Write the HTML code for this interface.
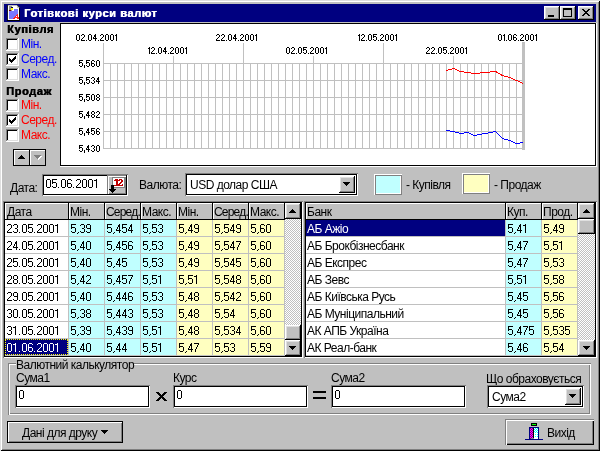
<!DOCTYPE html>
<html><head><meta charset="utf-8">
<style>
*{box-sizing:border-box;margin:0;padding:0}
html,body{width:600px;height:451px;overflow:hidden;background:#c0c0c0}
body{position:relative;font-family:"Liberation Sans",sans-serif;font-size:11px;color:#000}
.a{position:absolute}
.t{position:absolute;white-space:nowrap;line-height:16px;font-size:12px;letter-spacing:-0.5px}
.b{font-weight:bold;font-size:11px;letter-spacing:0.6px;text-shadow:0.6px 0 currentColor}
.raised{background:#c0c0c0;box-shadow:inset -1px -1px #000,inset 1px 1px #fff,inset -2px -2px #808080,inset 2px 2px #dfdfdf}
.sunk{background:#fff;box-shadow:inset 1px 1px #808080,inset -1px -1px #fff,inset 2px 2px #000,inset -2px -2px #000}
.cb{position:absolute;width:13px;height:13px;background:#fff;box-shadow:inset -1px -1px #fff,inset 1px 1px #808080,inset -2px -2px #dfdfdf,inset 2px 2px #000}
.cell{position:absolute;height:16px;line-height:16px;padding-left:2px;white-space:nowrap;overflow:hidden}
.cl{position:absolute;width:60px;text-align:right;font-size:9.6px;line-height:10px;letter-spacing:-0.6px;white-space:nowrap}
.cy{position:absolute;width:60px;text-align:right;font-size:9.6px;line-height:10px;letter-spacing:-0.6px;white-space:nowrap}
</style></head><body><div class="a" style="left:0;top:0;width:600px;height:451px;will-change:transform">
<!-- window frame -->
<div class="a" style="left:0;top:0;width:600px;height:451px;box-shadow:inset 1px 1px #dfdfdf,inset -1px -1px #000,inset 2px 2px #fff,inset -2px -2px #808080"></div>
<!-- title bar -->
<div class="a" style="left:4px;top:4px;width:592px;height:18px;background:#000080"></div>
<div class="t b" style="left:24px;top:5px;color:#fff">Готівкові курси валют</div>
<!-- icon -->
<svg class="a" style="left:5px;top:4px" width="17" height="18" shape-rendering="crispEdges">
<rect x="3" y="2" width="11" height="14" fill="#fff"/>
<rect x="2" y="1" width="10" height="1" fill="#c0c0c0"/>
<rect x="2" y="1" width="1" height="16" fill="#202020"/>
<rect x="2" y="16" width="13" height="1" fill="#000"/>
<rect x="14" y="4" width="1" height="13" fill="#000"/>
<path d="M12 1h1v1h-1zM13 2h1v1h-1zM14 3h1v1h-1z" fill="#404040"/>
<path d="M12 2h1v2h-1zM13 3h1v1h-1z" fill="#c0c0c0"/>
<path d="M4 2h3v6h-3z" fill="#909090"/>
<path d="M6 3h2v1h-2z" fill="#000040"/><path d="M6 4h2v2h-2z" fill="#ffff00"/><path d="M4 6h2v1h-2z" fill="#800000"/>
<path d="M9 5h4v2h-4zM4 7h9v2h-9zM4 9h9v1h-9zM4 10h8v1h-8zM4 11h7v1h-7zM4 12h6v1h-6zM4 13h5v1h-5zM4 14h4v1h-4z" fill="#7878ff"/>
<path d="M12 10h1v1h-1zM11 11h2v1h-2zM10 12h1v1h-1zM12 12h1v1h-1zM9 13h5v1h-5zM8 14h2v1h-2zM12 14h2v1h-2z" fill="#ff2020"/>
</svg>
<!-- title buttons -->
<div class="a raised" style="left:544px;top:6px;width:16px;height:14px"><div class="a" style="left:4px;top:9px;width:6px;height:2px;background:#000"></div></div>
<div class="a raised" style="left:560px;top:6px;width:16px;height:14px"><div class="a" style="left:3px;top:2px;width:9px;height:9px;border:1px solid #000;border-top-width:2px"></div></div>
<div class="a raised" style="left:578px;top:6px;width:16px;height:14px">
<svg class="a" style="left:0;top:0" width="16" height="14" shape-rendering="crispEdges"><path d="M4 3h2v1h-2zM10 3h2v1h-2zM5 4h2v1h-2zM9 4h2v1h-2zM6 5h4v1h-4zM7 6h2v1h-2zM6 7h4v1h-4zM5 8h2v1h-2zM9 8h2v1h-2zM4 9h2v1h-2zM10 9h2v1h-2z" fill="#000"/></svg>
</div>
<!-- left panel -->
<div class="t b" style="left:7px;top:21px">Купівля</div>
<div class="cb" style="left:6px;top:38px"></div><div class="t" style="left:21px;top:36px;color:#0000ff">Мін.</div>
<div class="cb" style="left:6px;top:53px"><svg class="a" style="left:3px;top:3px" width="7" height="7" shape-rendering="crispEdges"><path d="M6 0h1v1h-1zM5 1h2v1h-2zM0 2h1v1h-1zM4 2h3v1h-3zM0 3h2v1h-2zM3 3h3v1h-3zM0 4h5v1h-5zM1 5h3v1h-3zM2 6h1v1h-1z" fill="#000"/></svg></div><div class="t" style="left:21px;top:51px;color:#0000ff">Серед.</div>
<div class="cb" style="left:6px;top:68px"></div><div class="t" style="left:21px;top:66px;color:#0000ff">Макс.</div>
<div class="t b" style="left:6px;top:83px">Продаж</div>
<div class="cb" style="left:6px;top:99px"></div><div class="t" style="left:21px;top:97px;color:#ff0000">Мін.</div>
<div class="cb" style="left:6px;top:114px"><svg class="a" style="left:3px;top:3px" width="7" height="7" shape-rendering="crispEdges"><path d="M6 0h1v1h-1zM5 1h2v1h-2zM0 2h1v1h-1zM4 2h3v1h-3zM0 3h2v1h-2zM3 3h3v1h-3zM0 4h5v1h-5zM1 5h3v1h-3zM2 6h1v1h-1z" fill="#000"/></svg></div><div class="t" style="left:21px;top:112px;color:#ff0000">Серед.</div>
<div class="cb" style="left:6px;top:129px"></div><div class="t" style="left:21px;top:127px;color:#ff0000">Макс.</div>
<!-- spin buttons -->
<div class="a" style="left:13px;top:149px;width:33px;height:17px;background:#000"></div>
<div class="a" style="left:14px;top:150px;width:15px;height:15px;background:#c0c0c0;box-shadow:inset 1px 1px #fff"></div>
<div class="a" style="left:30px;top:150px;width:15px;height:15px;background:#c0c0c0;box-shadow:inset 1px 1px #fff"></div>
<svg class="a" style="left:18px;top:155px" width="7" height="4" shape-rendering="crispEdges"><path d="M3 0h1v1h-1zM2 1h3v1h-3zM1 2h5v1h-5zM0 3h7v1h-7z" fill="#000"/></svg>
<svg class="a" style="left:34px;top:155px" width="8" height="5" shape-rendering="crispEdges"><path d="M1 1h7v1h-7zM2 2h5v1h-5zM3 3h3v1h-3zM4 4h1v1h-1z" fill="#fff"/><path d="M0 0h7v1h-7zM1 1h5v1h-5zM2 2h3v1h-3zM3 3h1v1h-1z" fill="#808080"/></svg>
<!-- chart -->
<div class="a" style="left:60px;top:23px;width:537px;height:144px;background:#fff;box-shadow:inset -1px -1px #fff,inset 1px 1px #000,inset -2px -2px #000"></div>
<svg class="a" style="left:0;top:0" width="600" height="170" shape-rendering="crispEdges">
<path d="M103.5 63V149M110.5 63V149M117.5 63V149M124.5 63V149M131.5 63V149M138.5 63V149M145.5 63V149M152.5 63V149M159.5 63V149M166.5 63V149M173.5 63V149M180.5 63V149M187.5 63V149M194.5 63V149M201.5 63V149M208.5 63V149M215.5 63V149M222.5 63V149M229.5 63V149M236.5 63V149M243.5 63V149M250.5 63V149M257.5 63V149M264.5 63V149M271.5 63V149M278.5 63V149M285.5 63V149M292.5 63V149M299.5 63V149M306.5 63V149M313.5 63V149M320.5 63V149M327.5 63V149M334.5 63V149M341.5 63V149M348.5 63V149M355.5 63V149M362.5 63V149M369.5 63V149M376.5 63V149M383.5 63V149M390.5 63V149M397.5 63V149M404.5 63V149M411.5 63V149M418.5 63V149M425.5 63V149M432.5 63V149M439.5 63V149M446.5 63V149M453.5 63V149M460.5 63V149M467.5 63V149M474.5 63V149M481.5 63V149M488.5 63V149M495.5 63V149M502.5 63V149M509.5 63V149M516.5 63V149M523.5 63V149" stroke="#c0c0c0" stroke-width="1" fill="none"/>
<path d="M103 63.5H523M103 80.5H523M103 97.5H523M103 114.5H523M103 131.5H523M103 148.5H523" stroke="#c0c0c0" stroke-width="1" fill="none"/>
<path d="M103.5 43V63M173.5 56V63M243.5 43V63M313.5 56V63M383.5 43V63M453.5 56V63M523.5 43V63" stroke="#c0c0c0" stroke-width="1" fill="none"/>
<rect x="522" y="42" width="3" height="108" fill="#c0c0c0"/>
<polyline points="446.5,70.5 453.5,68.5 460.5,71.5 467.5,72.5 474.5,73.5 495.5,71.5 502.5,75.5 509.5,77.5 516.5,80.5 523.5,83.5" stroke="#ff0000" stroke-width="1" fill="none"/>
<polyline points="446.5,130.5 453.5,131.5 460.5,133.5 467.5,132.5 474.5,135.5 495.5,131.5 502.5,138.5 509.5,140.5 516.5,143.5 523.5,142.5" stroke="#0000ff" stroke-width="1" fill="none"/>
</svg>
<svg class="a" style="left:0;top:0" width="600" height="170" shape-rendering="crispEdges"><path d="M77 34h2v1h-2zM76 35h1v1h-1zM79 35h1v1h-1zM76 36h1v1h-1zM79 36h1v1h-1zM76 37h1v1h-1zM79 37h1v1h-1zM76 38h1v1h-1zM79 38h1v1h-1zM76 39h1v1h-1zM79 39h1v1h-1zM77 40h2v1h-2zM82 34h2v1h-2zM81 35h1v1h-1zM84 35h1v1h-1zM84 36h1v1h-1zM83 37h1v1h-1zM82 38h1v1h-1zM81 39h1v1h-1zM81 40h4v1h-4zM86 40h1v1h-1zM89 34h2v1h-2zM88 35h1v1h-1zM91 35h1v1h-1zM88 36h1v1h-1zM91 36h1v1h-1zM88 37h1v1h-1zM91 37h1v1h-1zM88 38h1v1h-1zM91 38h1v1h-1zM88 39h1v1h-1zM91 39h1v1h-1zM89 40h2v1h-2zM95 34h1v1h-1zM94 35h2v1h-2zM94 36h2v1h-2zM93 37h1v1h-1zM95 37h1v1h-1zM93 38h4v1h-4zM95 39h1v1h-1zM95 40h1v1h-1zM98 40h1v1h-1zM101 34h2v1h-2zM100 35h1v1h-1zM103 35h1v1h-1zM103 36h1v1h-1zM102 37h1v1h-1zM101 38h1v1h-1zM100 39h1v1h-1zM100 40h4v1h-4zM106 34h2v1h-2zM105 35h1v1h-1zM108 35h1v1h-1zM105 36h1v1h-1zM108 36h1v1h-1zM105 37h1v1h-1zM108 37h1v1h-1zM105 38h1v1h-1zM108 38h1v1h-1zM105 39h1v1h-1zM108 39h1v1h-1zM106 40h2v1h-2zM111 34h2v1h-2zM110 35h1v1h-1zM113 35h1v1h-1zM110 36h1v1h-1zM113 36h1v1h-1zM110 37h1v1h-1zM113 37h1v1h-1zM110 38h1v1h-1zM113 38h1v1h-1zM110 39h1v1h-1zM113 39h1v1h-1zM111 40h2v1h-2zM116 34h1v1h-1zM115 35h2v1h-2zM116 36h1v1h-1zM116 37h1v1h-1zM116 38h1v1h-1zM116 39h1v1h-1zM116 40h1v1h-1zM149 47h1v1h-1zM148 48h2v1h-2zM149 49h1v1h-1zM149 50h1v1h-1zM149 51h1v1h-1zM149 52h1v1h-1zM149 53h1v1h-1zM152 47h2v1h-2zM151 48h1v1h-1zM154 48h1v1h-1zM154 49h1v1h-1zM153 50h1v1h-1zM152 51h1v1h-1zM151 52h1v1h-1zM151 53h4v1h-4zM156 53h1v1h-1zM159 47h2v1h-2zM158 48h1v1h-1zM161 48h1v1h-1zM158 49h1v1h-1zM161 49h1v1h-1zM158 50h1v1h-1zM161 50h1v1h-1zM158 51h1v1h-1zM161 51h1v1h-1zM158 52h1v1h-1zM161 52h1v1h-1zM159 53h2v1h-2zM165 47h1v1h-1zM164 48h2v1h-2zM164 49h2v1h-2zM163 50h1v1h-1zM165 50h1v1h-1zM163 51h4v1h-4zM165 52h1v1h-1zM165 53h1v1h-1zM168 53h1v1h-1zM171 47h2v1h-2zM170 48h1v1h-1zM173 48h1v1h-1zM173 49h1v1h-1zM172 50h1v1h-1zM171 51h1v1h-1zM170 52h1v1h-1zM170 53h4v1h-4zM176 47h2v1h-2zM175 48h1v1h-1zM178 48h1v1h-1zM175 49h1v1h-1zM178 49h1v1h-1zM175 50h1v1h-1zM178 50h1v1h-1zM175 51h1v1h-1zM178 51h1v1h-1zM175 52h1v1h-1zM178 52h1v1h-1zM176 53h2v1h-2zM181 47h2v1h-2zM180 48h1v1h-1zM183 48h1v1h-1zM180 49h1v1h-1zM183 49h1v1h-1zM180 50h1v1h-1zM183 50h1v1h-1zM180 51h1v1h-1zM183 51h1v1h-1zM180 52h1v1h-1zM183 52h1v1h-1zM181 53h2v1h-2zM186 47h1v1h-1zM185 48h2v1h-2zM186 49h1v1h-1zM186 50h1v1h-1zM186 51h1v1h-1zM186 52h1v1h-1zM186 53h1v1h-1zM217 34h2v1h-2zM216 35h1v1h-1zM219 35h1v1h-1zM219 36h1v1h-1zM218 37h1v1h-1zM217 38h1v1h-1zM216 39h1v1h-1zM216 40h4v1h-4zM222 34h2v1h-2zM221 35h1v1h-1zM224 35h1v1h-1zM224 36h1v1h-1zM223 37h1v1h-1zM222 38h1v1h-1zM221 39h1v1h-1zM221 40h4v1h-4zM226 40h1v1h-1zM229 34h2v1h-2zM228 35h1v1h-1zM231 35h1v1h-1zM228 36h1v1h-1zM231 36h1v1h-1zM228 37h1v1h-1zM231 37h1v1h-1zM228 38h1v1h-1zM231 38h1v1h-1zM228 39h1v1h-1zM231 39h1v1h-1zM229 40h2v1h-2zM235 34h1v1h-1zM234 35h2v1h-2zM234 36h2v1h-2zM233 37h1v1h-1zM235 37h1v1h-1zM233 38h4v1h-4zM235 39h1v1h-1zM235 40h1v1h-1zM238 40h1v1h-1zM241 34h2v1h-2zM240 35h1v1h-1zM243 35h1v1h-1zM243 36h1v1h-1zM242 37h1v1h-1zM241 38h1v1h-1zM240 39h1v1h-1zM240 40h4v1h-4zM246 34h2v1h-2zM245 35h1v1h-1zM248 35h1v1h-1zM245 36h1v1h-1zM248 36h1v1h-1zM245 37h1v1h-1zM248 37h1v1h-1zM245 38h1v1h-1zM248 38h1v1h-1zM245 39h1v1h-1zM248 39h1v1h-1zM246 40h2v1h-2zM251 34h2v1h-2zM250 35h1v1h-1zM253 35h1v1h-1zM250 36h1v1h-1zM253 36h1v1h-1zM250 37h1v1h-1zM253 37h1v1h-1zM250 38h1v1h-1zM253 38h1v1h-1zM250 39h1v1h-1zM253 39h1v1h-1zM251 40h2v1h-2zM256 34h1v1h-1zM255 35h2v1h-2zM256 36h1v1h-1zM256 37h1v1h-1zM256 38h1v1h-1zM256 39h1v1h-1zM256 40h1v1h-1zM287 47h2v1h-2zM286 48h1v1h-1zM289 48h1v1h-1zM286 49h1v1h-1zM289 49h1v1h-1zM286 50h1v1h-1zM289 50h1v1h-1zM286 51h1v1h-1zM289 51h1v1h-1zM286 52h1v1h-1zM289 52h1v1h-1zM287 53h2v1h-2zM292 47h2v1h-2zM291 48h1v1h-1zM294 48h1v1h-1zM294 49h1v1h-1zM293 50h1v1h-1zM292 51h1v1h-1zM291 52h1v1h-1zM291 53h4v1h-4zM296 53h1v1h-1zM299 47h2v1h-2zM298 48h1v1h-1zM301 48h1v1h-1zM298 49h1v1h-1zM301 49h1v1h-1zM298 50h1v1h-1zM301 50h1v1h-1zM298 51h1v1h-1zM301 51h1v1h-1zM298 52h1v1h-1zM301 52h1v1h-1zM299 53h2v1h-2zM303 47h4v1h-4zM303 48h1v1h-1zM303 49h3v1h-3zM303 50h1v1h-1zM306 50h1v1h-1zM306 51h1v1h-1zM303 52h1v1h-1zM306 52h1v1h-1zM304 53h2v1h-2zM308 53h1v1h-1zM311 47h2v1h-2zM310 48h1v1h-1zM313 48h1v1h-1zM313 49h1v1h-1zM312 50h1v1h-1zM311 51h1v1h-1zM310 52h1v1h-1zM310 53h4v1h-4zM316 47h2v1h-2zM315 48h1v1h-1zM318 48h1v1h-1zM315 49h1v1h-1zM318 49h1v1h-1zM315 50h1v1h-1zM318 50h1v1h-1zM315 51h1v1h-1zM318 51h1v1h-1zM315 52h1v1h-1zM318 52h1v1h-1zM316 53h2v1h-2zM321 47h2v1h-2zM320 48h1v1h-1zM323 48h1v1h-1zM320 49h1v1h-1zM323 49h1v1h-1zM320 50h1v1h-1zM323 50h1v1h-1zM320 51h1v1h-1zM323 51h1v1h-1zM320 52h1v1h-1zM323 52h1v1h-1zM321 53h2v1h-2zM326 47h1v1h-1zM325 48h2v1h-2zM326 49h1v1h-1zM326 50h1v1h-1zM326 51h1v1h-1zM326 52h1v1h-1zM326 53h1v1h-1zM359 34h1v1h-1zM358 35h2v1h-2zM359 36h1v1h-1zM359 37h1v1h-1zM359 38h1v1h-1zM359 39h1v1h-1zM359 40h1v1h-1zM362 34h2v1h-2zM361 35h1v1h-1zM364 35h1v1h-1zM364 36h1v1h-1zM363 37h1v1h-1zM362 38h1v1h-1zM361 39h1v1h-1zM361 40h4v1h-4zM366 40h1v1h-1zM369 34h2v1h-2zM368 35h1v1h-1zM371 35h1v1h-1zM368 36h1v1h-1zM371 36h1v1h-1zM368 37h1v1h-1zM371 37h1v1h-1zM368 38h1v1h-1zM371 38h1v1h-1zM368 39h1v1h-1zM371 39h1v1h-1zM369 40h2v1h-2zM373 34h4v1h-4zM373 35h1v1h-1zM373 36h3v1h-3zM373 37h1v1h-1zM376 37h1v1h-1zM376 38h1v1h-1zM373 39h1v1h-1zM376 39h1v1h-1zM374 40h2v1h-2zM378 40h1v1h-1zM381 34h2v1h-2zM380 35h1v1h-1zM383 35h1v1h-1zM383 36h1v1h-1zM382 37h1v1h-1zM381 38h1v1h-1zM380 39h1v1h-1zM380 40h4v1h-4zM386 34h2v1h-2zM385 35h1v1h-1zM388 35h1v1h-1zM385 36h1v1h-1zM388 36h1v1h-1zM385 37h1v1h-1zM388 37h1v1h-1zM385 38h1v1h-1zM388 38h1v1h-1zM385 39h1v1h-1zM388 39h1v1h-1zM386 40h2v1h-2zM391 34h2v1h-2zM390 35h1v1h-1zM393 35h1v1h-1zM390 36h1v1h-1zM393 36h1v1h-1zM390 37h1v1h-1zM393 37h1v1h-1zM390 38h1v1h-1zM393 38h1v1h-1zM390 39h1v1h-1zM393 39h1v1h-1zM391 40h2v1h-2zM396 34h1v1h-1zM395 35h2v1h-2zM396 36h1v1h-1zM396 37h1v1h-1zM396 38h1v1h-1zM396 39h1v1h-1zM396 40h1v1h-1zM427 47h2v1h-2zM426 48h1v1h-1zM429 48h1v1h-1zM429 49h1v1h-1zM428 50h1v1h-1zM427 51h1v1h-1zM426 52h1v1h-1zM426 53h4v1h-4zM432 47h2v1h-2zM431 48h1v1h-1zM434 48h1v1h-1zM434 49h1v1h-1zM433 50h1v1h-1zM432 51h1v1h-1zM431 52h1v1h-1zM431 53h4v1h-4zM436 53h1v1h-1zM439 47h2v1h-2zM438 48h1v1h-1zM441 48h1v1h-1zM438 49h1v1h-1zM441 49h1v1h-1zM438 50h1v1h-1zM441 50h1v1h-1zM438 51h1v1h-1zM441 51h1v1h-1zM438 52h1v1h-1zM441 52h1v1h-1zM439 53h2v1h-2zM443 47h4v1h-4zM443 48h1v1h-1zM443 49h3v1h-3zM443 50h1v1h-1zM446 50h1v1h-1zM446 51h1v1h-1zM443 52h1v1h-1zM446 52h1v1h-1zM444 53h2v1h-2zM448 53h1v1h-1zM451 47h2v1h-2zM450 48h1v1h-1zM453 48h1v1h-1zM453 49h1v1h-1zM452 50h1v1h-1zM451 51h1v1h-1zM450 52h1v1h-1zM450 53h4v1h-4zM456 47h2v1h-2zM455 48h1v1h-1zM458 48h1v1h-1zM455 49h1v1h-1zM458 49h1v1h-1zM455 50h1v1h-1zM458 50h1v1h-1zM455 51h1v1h-1zM458 51h1v1h-1zM455 52h1v1h-1zM458 52h1v1h-1zM456 53h2v1h-2zM461 47h2v1h-2zM460 48h1v1h-1zM463 48h1v1h-1zM460 49h1v1h-1zM463 49h1v1h-1zM460 50h1v1h-1zM463 50h1v1h-1zM460 51h1v1h-1zM463 51h1v1h-1zM460 52h1v1h-1zM463 52h1v1h-1zM461 53h2v1h-2zM466 47h1v1h-1zM465 48h2v1h-2zM466 49h1v1h-1zM466 50h1v1h-1zM466 51h1v1h-1zM466 52h1v1h-1zM466 53h1v1h-1zM499 34h2v1h-2zM498 35h1v1h-1zM501 35h1v1h-1zM498 36h1v1h-1zM501 36h1v1h-1zM498 37h1v1h-1zM501 37h1v1h-1zM498 38h1v1h-1zM501 38h1v1h-1zM498 39h1v1h-1zM501 39h1v1h-1zM499 40h2v1h-2zM504 34h1v1h-1zM503 35h2v1h-2zM504 36h1v1h-1zM504 37h1v1h-1zM504 38h1v1h-1zM504 39h1v1h-1zM504 40h1v1h-1zM506 40h1v1h-1zM509 34h2v1h-2zM508 35h1v1h-1zM511 35h1v1h-1zM508 36h1v1h-1zM511 36h1v1h-1zM508 37h1v1h-1zM511 37h1v1h-1zM508 38h1v1h-1zM511 38h1v1h-1zM508 39h1v1h-1zM511 39h1v1h-1zM509 40h2v1h-2zM514 34h2v1h-2zM513 35h1v1h-1zM516 35h1v1h-1zM513 36h1v1h-1zM513 37h3v1h-3zM513 38h1v1h-1zM516 38h1v1h-1zM513 39h1v1h-1zM516 39h1v1h-1zM514 40h2v1h-2zM518 40h1v1h-1zM521 34h2v1h-2zM520 35h1v1h-1zM523 35h1v1h-1zM523 36h1v1h-1zM522 37h1v1h-1zM521 38h1v1h-1zM520 39h1v1h-1zM520 40h4v1h-4zM526 34h2v1h-2zM525 35h1v1h-1zM528 35h1v1h-1zM525 36h1v1h-1zM528 36h1v1h-1zM525 37h1v1h-1zM528 37h1v1h-1zM525 38h1v1h-1zM528 38h1v1h-1zM525 39h1v1h-1zM528 39h1v1h-1zM526 40h2v1h-2zM531 34h2v1h-2zM530 35h1v1h-1zM533 35h1v1h-1zM530 36h1v1h-1zM533 36h1v1h-1zM530 37h1v1h-1zM533 37h1v1h-1zM530 38h1v1h-1zM533 38h1v1h-1zM530 39h1v1h-1zM533 39h1v1h-1zM531 40h2v1h-2zM536 34h1v1h-1zM535 35h2v1h-2zM536 36h1v1h-1zM536 37h1v1h-1zM536 38h1v1h-1zM536 39h1v1h-1zM536 40h1v1h-1zM79 60h4v1h-4zM79 61h1v1h-1zM79 62h3v1h-3zM79 63h1v1h-1zM82 63h1v1h-1zM82 64h1v1h-1zM79 65h1v1h-1zM82 65h1v1h-1zM80 66h2v1h-2zM84 65h1v1h-1zM84 66h1v1h-1zM84 67h1v1h-1zM86 60h4v1h-4zM86 61h1v1h-1zM86 62h3v1h-3zM86 63h1v1h-1zM89 63h1v1h-1zM89 64h1v1h-1zM86 65h1v1h-1zM89 65h1v1h-1zM87 66h2v1h-2zM92 60h2v1h-2zM91 61h1v1h-1zM94 61h1v1h-1zM91 62h1v1h-1zM91 63h3v1h-3zM91 64h1v1h-1zM94 64h1v1h-1zM91 65h1v1h-1zM94 65h1v1h-1zM92 66h2v1h-2zM97 60h2v1h-2zM96 61h1v1h-1zM99 61h1v1h-1zM96 62h1v1h-1zM99 62h1v1h-1zM96 63h1v1h-1zM99 63h1v1h-1zM96 64h1v1h-1zM99 64h1v1h-1zM96 65h1v1h-1zM99 65h1v1h-1zM97 66h2v1h-2zM79 77h4v1h-4zM79 78h1v1h-1zM79 79h3v1h-3zM79 80h1v1h-1zM82 80h1v1h-1zM82 81h1v1h-1zM79 82h1v1h-1zM82 82h1v1h-1zM80 83h2v1h-2zM84 82h1v1h-1zM84 83h1v1h-1zM84 84h1v1h-1zM86 77h4v1h-4zM86 78h1v1h-1zM86 79h3v1h-3zM86 80h1v1h-1zM89 80h1v1h-1zM89 81h1v1h-1zM86 82h1v1h-1zM89 82h1v1h-1zM87 83h2v1h-2zM92 77h2v1h-2zM91 78h1v1h-1zM94 78h1v1h-1zM94 79h1v1h-1zM93 80h1v1h-1zM94 81h1v1h-1zM91 82h1v1h-1zM94 82h1v1h-1zM92 83h2v1h-2zM98 77h1v1h-1zM97 78h2v1h-2zM97 79h2v1h-2zM96 80h1v1h-1zM98 80h1v1h-1zM96 81h4v1h-4zM98 82h1v1h-1zM98 83h1v1h-1zM79 94h4v1h-4zM79 95h1v1h-1zM79 96h3v1h-3zM79 97h1v1h-1zM82 97h1v1h-1zM82 98h1v1h-1zM79 99h1v1h-1zM82 99h1v1h-1zM80 100h2v1h-2zM84 99h1v1h-1zM84 100h1v1h-1zM84 101h1v1h-1zM86 94h4v1h-4zM86 95h1v1h-1zM86 96h3v1h-3zM86 97h1v1h-1zM89 97h1v1h-1zM89 98h1v1h-1zM86 99h1v1h-1zM89 99h1v1h-1zM87 100h2v1h-2zM92 94h2v1h-2zM91 95h1v1h-1zM94 95h1v1h-1zM91 96h1v1h-1zM94 96h1v1h-1zM91 97h1v1h-1zM94 97h1v1h-1zM91 98h1v1h-1zM94 98h1v1h-1zM91 99h1v1h-1zM94 99h1v1h-1zM92 100h2v1h-2zM97 94h2v1h-2zM96 95h1v1h-1zM99 95h1v1h-1zM96 96h1v1h-1zM99 96h1v1h-1zM97 97h2v1h-2zM96 98h1v1h-1zM99 98h1v1h-1zM96 99h1v1h-1zM99 99h1v1h-1zM97 100h2v1h-2zM79 111h4v1h-4zM79 112h1v1h-1zM79 113h3v1h-3zM79 114h1v1h-1zM82 114h1v1h-1zM82 115h1v1h-1zM79 116h1v1h-1zM82 116h1v1h-1zM80 117h2v1h-2zM84 116h1v1h-1zM84 117h1v1h-1zM84 118h1v1h-1zM88 111h1v1h-1zM87 112h2v1h-2zM87 113h2v1h-2zM86 114h1v1h-1zM88 114h1v1h-1zM86 115h4v1h-4zM88 116h1v1h-1zM88 117h1v1h-1zM92 111h2v1h-2zM91 112h1v1h-1zM94 112h1v1h-1zM91 113h1v1h-1zM94 113h1v1h-1zM92 114h2v1h-2zM91 115h1v1h-1zM94 115h1v1h-1zM91 116h1v1h-1zM94 116h1v1h-1zM92 117h2v1h-2zM97 111h2v1h-2zM96 112h1v1h-1zM99 112h1v1h-1zM99 113h1v1h-1zM98 114h1v1h-1zM97 115h1v1h-1zM96 116h1v1h-1zM96 117h4v1h-4zM79 128h4v1h-4zM79 129h1v1h-1zM79 130h3v1h-3zM79 131h1v1h-1zM82 131h1v1h-1zM82 132h1v1h-1zM79 133h1v1h-1zM82 133h1v1h-1zM80 134h2v1h-2zM84 133h1v1h-1zM84 134h1v1h-1zM84 135h1v1h-1zM88 128h1v1h-1zM87 129h2v1h-2zM87 130h2v1h-2zM86 131h1v1h-1zM88 131h1v1h-1zM86 132h4v1h-4zM88 133h1v1h-1zM88 134h1v1h-1zM91 128h4v1h-4zM91 129h1v1h-1zM91 130h3v1h-3zM91 131h1v1h-1zM94 131h1v1h-1zM94 132h1v1h-1zM91 133h1v1h-1zM94 133h1v1h-1zM92 134h2v1h-2zM97 128h2v1h-2zM96 129h1v1h-1zM99 129h1v1h-1zM96 130h1v1h-1zM96 131h3v1h-3zM96 132h1v1h-1zM99 132h1v1h-1zM96 133h1v1h-1zM99 133h1v1h-1zM97 134h2v1h-2zM79 145h4v1h-4zM79 146h1v1h-1zM79 147h3v1h-3zM79 148h1v1h-1zM82 148h1v1h-1zM82 149h1v1h-1zM79 150h1v1h-1zM82 150h1v1h-1zM80 151h2v1h-2zM84 150h1v1h-1zM84 151h1v1h-1zM84 152h1v1h-1zM88 145h1v1h-1zM87 146h2v1h-2zM87 147h2v1h-2zM86 148h1v1h-1zM88 148h1v1h-1zM86 149h4v1h-4zM88 150h1v1h-1zM88 151h1v1h-1zM92 145h2v1h-2zM91 146h1v1h-1zM94 146h1v1h-1zM94 147h1v1h-1zM93 148h1v1h-1zM94 149h1v1h-1zM91 150h1v1h-1zM94 150h1v1h-1zM92 151h2v1h-2zM97 145h2v1h-2zM96 146h1v1h-1zM99 146h1v1h-1zM96 147h1v1h-1zM99 147h1v1h-1zM96 148h1v1h-1zM99 148h1v1h-1zM96 149h1v1h-1zM99 149h1v1h-1zM96 150h1v1h-1zM99 150h1v1h-1zM97 151h2v1h-2z" fill="#000"/></svg>
<!-- date row -->
<div class="t" style="left:10px;top:180px">Дата:</div>
<div class="a" style="left:42px;top:174px;width:86px;height:22px;background:#fff;box-shadow:inset 1px 1px #808080,inset -1px -1px #fff,inset 2px 2px #000,inset -2px -2px #000"></div>
<div class="a" style="left:107px;top:176px;width:19px;height:18px;background:#c0c0c0;box-shadow:inset 1px 0 #808080,inset 2px 1px #fff,inset -1px -1px #808080"></div>
<div class="a" style="left:107px;top:175px;width:19px;height:1px;background:#808080"></div>
<svg class="a" style="left:107px;top:175px" width="20" height="20" shape-rendering="crispEdges">
<rect x="5" y="2" width="13" height="11" fill="#808080"/><rect x="6" y="3" width="11" height="9" fill="#fff"/>
<path d="M8 4h3v1h-3zM7 5h4v1h-4zM9 6h2v4h-2zM7 10h4v1h-4z M12 4h3v1h-3zM11 5h2v1h-2zM14 5h2v1h-2zM14 6h2v1h-2zM13 7h2v1h-2zM12 8h2v1h-2zM11 9h2v1h-2zM15 9h1v1h-1zM11 10h5v1h-5z" fill="#c00000"/>
<path d="M4 10h3v4h-3zM2 14h7v1h-7zM3 15h5v1h-5zM4 16h3v1h-3zM5 17h1v1h-1z" fill="#000"/>
</svg>
<div class="t" style="left:139px;top:177px">Валюта:</div>
<div class="a" style="left:185px;top:173px;width:173px;height:23px;background:#fff;box-shadow:inset 1px 1px #808080,inset -1px -1px #fff,inset 2px 2px #000,inset -2px -2px #000"></div>
<div class="t" style="left:190px;top:177px">USD долар США</div>
<div class="a" style="left:339px;top:176px;width:16px;height:17px;background:#c0c0c0;box-shadow:inset -1px -1px #000,inset 1px 1px #fff,inset -2px -2px #808080,inset 2px 2px #dfdfdf"></div>
<svg class="a" style="left:343px;top:182px" width="7" height="4" shape-rendering="crispEdges"><path d="M0 0h7v1h-7zM1 1h5v1h-5zM2 2h3v1h-3zM3 3h1v1h-1z" fill="#000"/></svg>
<div class="a" style="left:374px;top:174px;width:28px;height:21px;background:#c0ffff;box-shadow:inset 1px 1px #fff,inset -1px -1px #808080,inset 2px 2px #808080,inset -2px -2px #fff"></div>
<div class="t" style="left:406px;top:177px">- Купівля</div>
<div class="a" style="left:462px;top:173px;width:28px;height:21px;background:#ffffc0;box-shadow:inset 1px 1px #fff,inset -1px -1px #808080,inset 2px 2px #808080,inset -2px -2px #fff"></div>
<div class="t" style="left:494px;top:177px">- Продаж</div>

<!-- left grid -->
<div class="a" style="left:3px;top:201px;width:300px;height:157px;background:#c0c0c0;box-shadow:inset 1px 1px #808080,inset -1px -1px #fff,inset 2px 2px #000,inset -2px -2px #000"></div>
<div class="a" style="left:4px;top:202px;width:281px;height:18px;background:#000"></div>
<div class="a" style="left:5px;top:203px;width:63px;height:16px;background:#c0c0c0;box-shadow:inset 1px 1px #fff"></div>
<div class="t" style="left:7px;top:204px">Дата</div>
<div class="a" style="left:69px;top:203px;width:35px;height:16px;background:#c0c0c0;box-shadow:inset 1px 1px #fff"></div>
<div class="t" style="left:70px;top:204px">Мін.</div>
<div class="a" style="left:105px;top:203px;width:35px;height:16px;background:#c0c0c0;box-shadow:inset 1px 1px #fff"></div>
<div class="t" style="left:106px;top:204px;letter-spacing:-0.8px">Серед.</div>
<div class="a" style="left:141px;top:203px;width:35px;height:16px;background:#c0c0c0;box-shadow:inset 1px 1px #fff"></div>
<div class="t" style="left:142px;top:204px">Макс.</div>
<div class="a" style="left:177px;top:203px;width:35px;height:16px;background:#c0c0c0;box-shadow:inset 1px 1px #fff"></div>
<div class="t" style="left:178px;top:204px">Мін.</div>
<div class="a" style="left:213px;top:203px;width:35px;height:16px;background:#c0c0c0;box-shadow:inset 1px 1px #fff"></div>
<div class="t" style="left:214px;top:204px;letter-spacing:-0.8px">Серед.</div>
<div class="a" style="left:249px;top:203px;width:35px;height:16px;background:#c0c0c0;box-shadow:inset 1px 1px #fff"></div>
<div class="t" style="left:250px;top:204px">Макс.</div>
<div class="a" style="left:5px;top:220px;width:280px;height:136px;background:#c0c0c0"></div>
<div class="a" style="left:5px;top:220px;width:63px;height:16px;background:#fff"></div>
<div class="a" style="left:69px;top:220px;width:35px;height:16px;background:#c0ffff"></div>
<div class="a" style="left:105px;top:220px;width:35px;height:16px;background:#c0ffff"></div>
<div class="a" style="left:141px;top:220px;width:35px;height:16px;background:#c0ffff"></div>
<div class="a" style="left:177px;top:220px;width:35px;height:16px;background:#ffffc0"></div>
<div class="a" style="left:213px;top:220px;width:35px;height:16px;background:#ffffc0"></div>
<div class="a" style="left:249px;top:220px;width:35px;height:16px;background:#ffffc0"></div>
<div class="a" style="left:5px;top:237px;width:63px;height:16px;background:#fff"></div>
<div class="a" style="left:69px;top:237px;width:35px;height:16px;background:#c0ffff"></div>
<div class="a" style="left:105px;top:237px;width:35px;height:16px;background:#c0ffff"></div>
<div class="a" style="left:141px;top:237px;width:35px;height:16px;background:#c0ffff"></div>
<div class="a" style="left:177px;top:237px;width:35px;height:16px;background:#ffffc0"></div>
<div class="a" style="left:213px;top:237px;width:35px;height:16px;background:#ffffc0"></div>
<div class="a" style="left:249px;top:237px;width:35px;height:16px;background:#ffffc0"></div>
<div class="a" style="left:5px;top:254px;width:63px;height:16px;background:#fff"></div>
<div class="a" style="left:69px;top:254px;width:35px;height:16px;background:#c0ffff"></div>
<div class="a" style="left:105px;top:254px;width:35px;height:16px;background:#c0ffff"></div>
<div class="a" style="left:141px;top:254px;width:35px;height:16px;background:#c0ffff"></div>
<div class="a" style="left:177px;top:254px;width:35px;height:16px;background:#ffffc0"></div>
<div class="a" style="left:213px;top:254px;width:35px;height:16px;background:#ffffc0"></div>
<div class="a" style="left:249px;top:254px;width:35px;height:16px;background:#ffffc0"></div>
<div class="a" style="left:5px;top:271px;width:63px;height:16px;background:#fff"></div>
<div class="a" style="left:69px;top:271px;width:35px;height:16px;background:#c0ffff"></div>
<div class="a" style="left:105px;top:271px;width:35px;height:16px;background:#c0ffff"></div>
<div class="a" style="left:141px;top:271px;width:35px;height:16px;background:#c0ffff"></div>
<div class="a" style="left:177px;top:271px;width:35px;height:16px;background:#ffffc0"></div>
<div class="a" style="left:213px;top:271px;width:35px;height:16px;background:#ffffc0"></div>
<div class="a" style="left:249px;top:271px;width:35px;height:16px;background:#ffffc0"></div>
<div class="a" style="left:5px;top:288px;width:63px;height:16px;background:#fff"></div>
<div class="a" style="left:69px;top:288px;width:35px;height:16px;background:#c0ffff"></div>
<div class="a" style="left:105px;top:288px;width:35px;height:16px;background:#c0ffff"></div>
<div class="a" style="left:141px;top:288px;width:35px;height:16px;background:#c0ffff"></div>
<div class="a" style="left:177px;top:288px;width:35px;height:16px;background:#ffffc0"></div>
<div class="a" style="left:213px;top:288px;width:35px;height:16px;background:#ffffc0"></div>
<div class="a" style="left:249px;top:288px;width:35px;height:16px;background:#ffffc0"></div>
<div class="a" style="left:5px;top:305px;width:63px;height:16px;background:#fff"></div>
<div class="a" style="left:69px;top:305px;width:35px;height:16px;background:#c0ffff"></div>
<div class="a" style="left:105px;top:305px;width:35px;height:16px;background:#c0ffff"></div>
<div class="a" style="left:141px;top:305px;width:35px;height:16px;background:#c0ffff"></div>
<div class="a" style="left:177px;top:305px;width:35px;height:16px;background:#ffffc0"></div>
<div class="a" style="left:213px;top:305px;width:35px;height:16px;background:#ffffc0"></div>
<div class="a" style="left:249px;top:305px;width:35px;height:16px;background:#ffffc0"></div>
<div class="a" style="left:5px;top:322px;width:63px;height:16px;background:#fff"></div>
<div class="a" style="left:69px;top:322px;width:35px;height:16px;background:#c0ffff"></div>
<div class="a" style="left:105px;top:322px;width:35px;height:16px;background:#c0ffff"></div>
<div class="a" style="left:141px;top:322px;width:35px;height:16px;background:#c0ffff"></div>
<div class="a" style="left:177px;top:322px;width:35px;height:16px;background:#ffffc0"></div>
<div class="a" style="left:213px;top:322px;width:35px;height:16px;background:#ffffc0"></div>
<div class="a" style="left:249px;top:322px;width:35px;height:16px;background:#ffffc0"></div>
<div class="a" style="left:5px;top:339px;width:63px;height:16px;background:#000080"></div>
<div class="a" style="left:69px;top:339px;width:35px;height:16px;background:#c0ffff"></div>
<div class="a" style="left:105px;top:339px;width:35px;height:16px;background:#c0ffff"></div>
<div class="a" style="left:141px;top:339px;width:35px;height:16px;background:#c0ffff"></div>
<div class="a" style="left:177px;top:339px;width:35px;height:16px;background:#ffffc0"></div>
<div class="a" style="left:213px;top:339px;width:35px;height:16px;background:#ffffc0"></div>
<div class="a" style="left:249px;top:339px;width:35px;height:16px;background:#ffffc0"></div>
<div class="a" style="left:5px;top:339px;width:63px;height:16px;border:1px dotted #ffff00"></div>
<div class="a" style="left:285px;top:219px;width:16px;height:121px;background-color:#c0c0c0;background-image:linear-gradient(45deg,#fff 25%,transparent 25%,transparent 75%,#fff 75%),linear-gradient(45deg,#fff 25%,transparent 25%,transparent 75%,#fff 75%);background-size:2px 2px;background-position:0 0,1px 1px"></div>
<div class="a raised" style="left:285px;top:203px;width:16px;height:16px"></div>
<svg class="a" style="left:289px;top:209px" width="7" height="4" shape-rendering="crispEdges"><path d="M3 0h1v1h-1zM2 1h3v1h-3zM1 2h5v1h-5zM0 3h7v1h-7z" fill="#000"/></svg>
<div class="a raised" style="left:285px;top:325px;width:16px;height:15px"></div>
<div class="a raised" style="left:285px;top:340px;width:16px;height:16px"></div>
<svg class="a" style="left:289px;top:346px" width="7" height="4" shape-rendering="crispEdges"><path d="M0 0h7v1h-7zM1 1h5v1h-5zM2 2h3v1h-3zM3 3h1v1h-1z" fill="#000"/></svg>
<!-- right grid -->
<div class="a" style="left:304px;top:201px;width:293px;height:157px;background:#c0c0c0;box-shadow:inset 1px 1px #808080,inset -1px -1px #fff,inset 2px 2px #000,inset -2px -2px #000"></div>
<div class="a" style="left:305px;top:202px;width:273px;height:18px;background:#000"></div>
<div class="a" style="left:306px;top:203px;width:199px;height:16px;background:#c0c0c0;box-shadow:inset 1px 1px #fff"></div>
<div class="t" style="left:307px;top:204px">Банк</div>
<div class="a" style="left:506px;top:203px;width:35px;height:16px;background:#c0c0c0;box-shadow:inset 1px 1px #fff"></div>
<div class="t" style="left:507px;top:204px">Куп.</div>
<div class="a" style="left:542px;top:203px;width:35px;height:16px;background:#c0c0c0;box-shadow:inset 1px 1px #fff"></div>
<div class="t" style="left:543px;top:204px">Прод.</div>
<div class="a" style="left:306px;top:220px;width:272px;height:136px;background:#c0c0c0"></div>
<div class="a" style="left:306px;top:220px;width:199px;height:16px;background:#000080"></div>
<div class="t" style="left:307px;top:221px;color:#fff">АБ Ажіо</div>
<div class="a" style="left:506px;top:220px;width:35px;height:16px;background:#c0ffff"></div>
<div class="a" style="left:542px;top:220px;width:35px;height:16px;background:#ffffc0"></div>
<div class="a" style="left:306px;top:237px;width:199px;height:16px;background:#fff"></div>
<div class="t" style="left:307px;top:238px;color:#000">АБ Брокбізнесбанк</div>
<div class="a" style="left:506px;top:237px;width:35px;height:16px;background:#c0ffff"></div>
<div class="a" style="left:542px;top:237px;width:35px;height:16px;background:#ffffc0"></div>
<div class="a" style="left:306px;top:254px;width:199px;height:16px;background:#fff"></div>
<div class="t" style="left:307px;top:255px;color:#000">АБ Експрес</div>
<div class="a" style="left:506px;top:254px;width:35px;height:16px;background:#c0ffff"></div>
<div class="a" style="left:542px;top:254px;width:35px;height:16px;background:#ffffc0"></div>
<div class="a" style="left:306px;top:271px;width:199px;height:16px;background:#fff"></div>
<div class="t" style="left:307px;top:272px;color:#000">АБ Зевс</div>
<div class="a" style="left:506px;top:271px;width:35px;height:16px;background:#c0ffff"></div>
<div class="a" style="left:542px;top:271px;width:35px;height:16px;background:#ffffc0"></div>
<div class="a" style="left:306px;top:288px;width:199px;height:16px;background:#fff"></div>
<div class="t" style="left:307px;top:289px;color:#000">АБ Київська Русь</div>
<div class="a" style="left:506px;top:288px;width:35px;height:16px;background:#c0ffff"></div>
<div class="a" style="left:542px;top:288px;width:35px;height:16px;background:#ffffc0"></div>
<div class="a" style="left:306px;top:305px;width:199px;height:16px;background:#fff"></div>
<div class="t" style="left:307px;top:306px;color:#000">АБ Муніципальний</div>
<div class="a" style="left:506px;top:305px;width:35px;height:16px;background:#c0ffff"></div>
<div class="a" style="left:542px;top:305px;width:35px;height:16px;background:#ffffc0"></div>
<div class="a" style="left:306px;top:322px;width:199px;height:16px;background:#fff"></div>
<div class="t" style="left:307px;top:323px;color:#000">АК АПБ Україна</div>
<div class="a" style="left:506px;top:322px;width:35px;height:16px;background:#c0ffff"></div>
<div class="a" style="left:542px;top:322px;width:35px;height:16px;background:#ffffc0"></div>
<div class="a" style="left:306px;top:339px;width:199px;height:16px;background:#fff"></div>
<div class="t" style="left:307px;top:340px;color:#000">АК Реал-банк</div>
<div class="a" style="left:506px;top:339px;width:35px;height:16px;background:#c0ffff"></div>
<div class="a" style="left:542px;top:339px;width:35px;height:16px;background:#ffffc0"></div>
<div class="a" style="left:578px;top:219px;width:17px;height:121px;background-color:#c0c0c0;background-image:linear-gradient(45deg,#fff 25%,transparent 25%,transparent 75%,#fff 75%),linear-gradient(45deg,#fff 25%,transparent 25%,transparent 75%,#fff 75%);background-size:2px 2px;background-position:0 0,1px 1px"></div>
<div class="a raised" style="left:578px;top:203px;width:17px;height:16px"></div>
<svg class="a" style="left:583px;top:209px" width="7" height="4" shape-rendering="crispEdges"><path d="M3 0h1v1h-1zM2 1h3v1h-3zM1 2h5v1h-5zM0 3h7v1h-7z" fill="#000"/></svg>
<div class="a raised" style="left:578px;top:219px;width:17px;height:15px"></div>
<div class="a raised" style="left:578px;top:340px;width:17px;height:16px"></div>
<svg class="a" style="left:583px;top:346px" width="7" height="4" shape-rendering="crispEdges"><path d="M0 0h7v1h-7zM1 1h5v1h-5zM2 2h3v1h-3zM3 3h1v1h-1z" fill="#000"/></svg>
<!-- group box -->
<div class="a" style="left:8px;top:363px;width:583px;height:52px;box-shadow:inset 1px 1px #808080,inset -1px -1px #fff,inset 2px 2px #fff,inset -2px -2px #808080"></div>
<div class="t" style="left:16px;top:359px;line-height:12px;background:#c0c0c0">Валютний калькулятор</div>
<div class="t" style="left:16px;top:370px">Сума1</div>
<div class="a" style="left:15px;top:385px;width:135px;height:23px;background:#fff;box-shadow:inset 1px 1px #808080,inset -1px -1px #fff,inset 2px 2px #000,inset -2px -2px #000"></div>
<svg class="a" style="left:156px;top:392px" width="11" height="9" shape-rendering="crispEdges"><path d="M0 0h3v1h-3zM8 0h3v1h-3zM1 1h3v1h-3zM7 1h3v1h-3zM2 2h3v1h-3zM6 2h3v1h-3zM3 3h5v1h-5zM4 4h3v1h-3zM3 5h5v1h-5zM2 6h3v1h-3zM6 6h3v1h-3zM1 7h3v1h-3zM7 7h3v1h-3zM0 8h3v1h-3zM8 8h3v1h-3z" fill="#000"/></svg>
<div class="t" style="left:173px;top:370px">Курс</div>
<div class="a" style="left:173px;top:385px;width:135px;height:23px;background:#fff;box-shadow:inset 1px 1px #808080,inset -1px -1px #fff,inset 2px 2px #000,inset -2px -2px #000"></div>
<div class="a" style="left:313px;top:391px;width:13px;height:2px;background:#000"></div>
<div class="a" style="left:313px;top:397px;width:13px;height:2px;background:#000"></div>
<div class="t" style="left:331px;top:370px">Сума2</div>
<div class="a" style="left:331px;top:385px;width:135px;height:23px;background:#fff;box-shadow:inset 1px 1px #808080,inset -1px -1px #fff,inset 2px 2px #000,inset -2px -2px #000"></div>
<div class="t" style="left:486px;top:371px">Що обраховується</div>
<div class="a" style="left:487px;top:385px;width:97px;height:23px;background:#fff;box-shadow:inset 1px 1px #808080,inset -1px -1px #fff,inset 2px 2px #000,inset -2px -2px #000"></div>
<div class="t" style="left:492px;top:389px">Сума2</div>
<div class="a" style="left:565px;top:388px;width:16px;height:17px;background:#c0c0c0;box-shadow:inset -1px -1px #000,inset 1px 1px #fff,inset -2px -2px #808080,inset 2px 2px #dfdfdf"></div>
<svg class="a" style="left:569px;top:394px" width="7" height="4" shape-rendering="crispEdges"><path d="M0 0h7v1h-7zM1 1h5v1h-5zM2 2h3v1h-3zM3 3h1v1h-1z" fill="#000"/></svg>

<!-- bottom buttons -->
<div class="a" style="left:7px;top:421px;width:116px;height:22px;background:#000"></div>
<div class="a raised" style="left:8px;top:422px;width:114px;height:20px;box-shadow:inset 1px 1px #fff,inset -1px -1px #808080"></div>
<div class="t" style="left:22px;top:425px">Дані для друку</div>
<svg class="a" style="left:101px;top:430px" width="7" height="4" shape-rendering="crispEdges"><path d="M0 0h7v1h-7zM1 1h5v1h-5zM2 2h3v1h-3zM3 3h1v1h-1z" fill="#000"/></svg>
<div class="a" style="left:505px;top:419px;width:89px;height:26px;background:#c0c0c0;box-shadow:inset 1px 1px #808080,inset 2px 2px #fff,inset -1px -1px #000,inset -2px -2px #808080"></div>
<svg class="a" style="left:524px;top:421px" width="20" height="20" shape-rendering="crispEdges">
<rect x="7" y="2" width="6" height="3" fill="#000"/><rect x="8" y="3" width="4" height="1" fill="#00ff00"/>
<rect x="5" y="6" width="10" height="13" fill="#000080"/>
<rect x="6" y="7" width="3" height="11" fill="#800080"/>
<path d="M7 7h1v1h-1zM6 8h1v1h-1zM8 8h1v1h-1zM7 9h1v1h-1zM6 10h1v1h-1zM8 10h1v1h-1zM7 11h1v1h-1zM6 12h1v1h-1zM8 12h1v1h-1zM7 13h1v1h-1zM6 14h1v1h-1zM8 14h1v1h-1zM7 15h1v1h-1zM6 16h1v1h-1zM8 16h1v1h-1zM7 17h1v1h-1z" fill="#ff00ff"/>
<rect x="9" y="7" width="1" height="11" fill="#000"/>
<rect x="10" y="7" width="4" height="11" fill="#fff"/>
<path d="M11 7h1v1h-1zM13 7h1v1h-1zM10 8h1v1h-1zM12 8h1v1h-1zM11 9h1v1h-1zM13 9h1v1h-1zM10 10h1v1h-1zM12 10h1v1h-1zM11 11h1v1h-1zM13 11h1v1h-1zM11 13h1v1h-1zM13 13h1v1h-1zM11 15h1v1h-1zM13 15h1v1h-1z" fill="#00ffff"/>
<rect x="7" y="17" width="3" height="1" fill="#808080"/>
<rect x="1" y="18" width="18" height="1" fill="#000080"/>
</svg>
<div class="t" style="left:547px;top:425px">Вихід</div>

<svg class="a" style="left:0;top:0" width="600" height="451" shape-rendering="crispEdges"><path d="M8 224h3v1h-3zM7 225h1v1h-1zM11 225h1v1h-1zM11 226h1v1h-1zM11 227h1v1h-1zM10 228h1v1h-1zM9 229h1v1h-1zM8 230h1v1h-1zM7 231h1v1h-1zM7 232h5v1h-5zM14 224h3v1h-3zM13 225h1v1h-1zM17 225h1v1h-1zM17 226h1v1h-1zM17 227h1v1h-1zM15 228h2v1h-2zM17 229h1v1h-1zM17 230h1v1h-1zM13 231h1v1h-1zM17 231h1v1h-1zM14 232h3v1h-3zM19 232h1v1h-1zM23 224h3v1h-3zM22 225h1v1h-1zM26 225h1v1h-1zM22 226h1v1h-1zM26 226h1v1h-1zM22 227h1v1h-1zM26 227h1v1h-1zM22 228h1v1h-1zM26 228h1v1h-1zM22 229h1v1h-1zM26 229h1v1h-1zM22 230h1v1h-1zM26 230h1v1h-1zM22 231h1v1h-1zM26 231h1v1h-1zM23 232h3v1h-3zM28 224h5v1h-5zM28 225h1v1h-1zM28 226h1v1h-1zM28 227h4v1h-4zM28 228h1v1h-1zM32 228h1v1h-1zM32 229h1v1h-1zM32 230h1v1h-1zM28 231h1v1h-1zM32 231h1v1h-1zM29 232h3v1h-3zM34 232h1v1h-1zM38 224h3v1h-3zM37 225h1v1h-1zM41 225h1v1h-1zM41 226h1v1h-1zM41 227h1v1h-1zM40 228h1v1h-1zM39 229h1v1h-1zM38 230h1v1h-1zM37 231h1v1h-1zM37 232h5v1h-5zM44 224h3v1h-3zM43 225h1v1h-1zM47 225h1v1h-1zM43 226h1v1h-1zM47 226h1v1h-1zM43 227h1v1h-1zM47 227h1v1h-1zM43 228h1v1h-1zM47 228h1v1h-1zM43 229h1v1h-1zM47 229h1v1h-1zM43 230h1v1h-1zM47 230h1v1h-1zM43 231h1v1h-1zM47 231h1v1h-1zM44 232h3v1h-3zM50 224h3v1h-3zM49 225h1v1h-1zM53 225h1v1h-1zM49 226h1v1h-1zM53 226h1v1h-1zM49 227h1v1h-1zM53 227h1v1h-1zM49 228h1v1h-1zM53 228h1v1h-1zM49 229h1v1h-1zM53 229h1v1h-1zM49 230h1v1h-1zM53 230h1v1h-1zM49 231h1v1h-1zM53 231h1v1h-1zM50 232h3v1h-3zM57 224h1v1h-1zM55 225h3v1h-3zM57 226h1v1h-1zM57 227h1v1h-1zM57 228h1v1h-1zM57 229h1v1h-1zM57 230h1v1h-1zM57 231h1v1h-1zM57 232h1v1h-1zM71 224h5v1h-5zM71 225h1v1h-1zM71 226h1v1h-1zM71 227h4v1h-4zM71 228h1v1h-1zM75 228h1v1h-1zM75 229h1v1h-1zM75 230h1v1h-1zM71 231h1v1h-1zM75 231h1v1h-1zM72 232h3v1h-3zM78 232h1v1h-1zM77 233h1v1h-1zM81 224h3v1h-3zM80 225h1v1h-1zM84 225h1v1h-1zM84 226h1v1h-1zM84 227h1v1h-1zM82 228h2v1h-2zM84 229h1v1h-1zM84 230h1v1h-1zM80 231h1v1h-1zM84 231h1v1h-1zM81 232h3v1h-3zM87 224h3v1h-3zM86 225h1v1h-1zM90 225h1v1h-1zM86 226h1v1h-1zM90 226h1v1h-1zM86 227h1v1h-1zM90 227h1v1h-1zM87 228h4v1h-4zM90 229h1v1h-1zM90 230h1v1h-1zM86 231h1v1h-1zM90 231h1v1h-1zM87 232h3v1h-3zM107 224h5v1h-5zM107 225h1v1h-1zM107 226h1v1h-1zM107 227h4v1h-4zM107 228h1v1h-1zM111 228h1v1h-1zM111 229h1v1h-1zM111 230h1v1h-1zM107 231h1v1h-1zM111 231h1v1h-1zM108 232h3v1h-3zM114 232h1v1h-1zM113 233h1v1h-1zM119 224h1v1h-1zM118 225h2v1h-2zM118 226h2v1h-2zM117 227h1v1h-1zM119 227h1v1h-1zM117 228h1v1h-1zM119 228h1v1h-1zM116 229h1v1h-1zM119 229h1v1h-1zM116 230h5v1h-5zM119 231h1v1h-1zM119 232h1v1h-1zM122 224h5v1h-5zM122 225h1v1h-1zM122 226h1v1h-1zM122 227h4v1h-4zM122 228h1v1h-1zM126 228h1v1h-1zM126 229h1v1h-1zM126 230h1v1h-1zM122 231h1v1h-1zM126 231h1v1h-1zM123 232h3v1h-3zM131 224h1v1h-1zM130 225h2v1h-2zM130 226h2v1h-2zM129 227h1v1h-1zM131 227h1v1h-1zM129 228h1v1h-1zM131 228h1v1h-1zM128 229h1v1h-1zM131 229h1v1h-1zM128 230h5v1h-5zM131 231h1v1h-1zM131 232h1v1h-1zM143 224h5v1h-5zM143 225h1v1h-1zM143 226h1v1h-1zM143 227h4v1h-4zM143 228h1v1h-1zM147 228h1v1h-1zM147 229h1v1h-1zM147 230h1v1h-1zM143 231h1v1h-1zM147 231h1v1h-1zM144 232h3v1h-3zM150 232h1v1h-1zM149 233h1v1h-1zM152 224h5v1h-5zM152 225h1v1h-1zM152 226h1v1h-1zM152 227h4v1h-4zM152 228h1v1h-1zM156 228h1v1h-1zM156 229h1v1h-1zM156 230h1v1h-1zM152 231h1v1h-1zM156 231h1v1h-1zM153 232h3v1h-3zM159 224h3v1h-3zM158 225h1v1h-1zM162 225h1v1h-1zM162 226h1v1h-1zM162 227h1v1h-1zM160 228h2v1h-2zM162 229h1v1h-1zM162 230h1v1h-1zM158 231h1v1h-1zM162 231h1v1h-1zM159 232h3v1h-3zM179 224h5v1h-5zM179 225h1v1h-1zM179 226h1v1h-1zM179 227h4v1h-4zM179 228h1v1h-1zM183 228h1v1h-1zM183 229h1v1h-1zM183 230h1v1h-1zM179 231h1v1h-1zM183 231h1v1h-1zM180 232h3v1h-3zM186 232h1v1h-1zM185 233h1v1h-1zM191 224h1v1h-1zM190 225h2v1h-2zM190 226h2v1h-2zM189 227h1v1h-1zM191 227h1v1h-1zM189 228h1v1h-1zM191 228h1v1h-1zM188 229h1v1h-1zM191 229h1v1h-1zM188 230h5v1h-5zM191 231h1v1h-1zM191 232h1v1h-1zM195 224h3v1h-3zM194 225h1v1h-1zM198 225h1v1h-1zM194 226h1v1h-1zM198 226h1v1h-1zM194 227h1v1h-1zM198 227h1v1h-1zM195 228h4v1h-4zM198 229h1v1h-1zM198 230h1v1h-1zM194 231h1v1h-1zM198 231h1v1h-1zM195 232h3v1h-3zM215 224h5v1h-5zM215 225h1v1h-1zM215 226h1v1h-1zM215 227h4v1h-4zM215 228h1v1h-1zM219 228h1v1h-1zM219 229h1v1h-1zM219 230h1v1h-1zM215 231h1v1h-1zM219 231h1v1h-1zM216 232h3v1h-3zM222 232h1v1h-1zM221 233h1v1h-1zM224 224h5v1h-5zM224 225h1v1h-1zM224 226h1v1h-1zM224 227h4v1h-4zM224 228h1v1h-1zM228 228h1v1h-1zM228 229h1v1h-1zM228 230h1v1h-1zM224 231h1v1h-1zM228 231h1v1h-1zM225 232h3v1h-3zM233 224h1v1h-1zM232 225h2v1h-2zM232 226h2v1h-2zM231 227h1v1h-1zM233 227h1v1h-1zM231 228h1v1h-1zM233 228h1v1h-1zM230 229h1v1h-1zM233 229h1v1h-1zM230 230h5v1h-5zM233 231h1v1h-1zM233 232h1v1h-1zM237 224h3v1h-3zM236 225h1v1h-1zM240 225h1v1h-1zM236 226h1v1h-1zM240 226h1v1h-1zM236 227h1v1h-1zM240 227h1v1h-1zM237 228h4v1h-4zM240 229h1v1h-1zM240 230h1v1h-1zM236 231h1v1h-1zM240 231h1v1h-1zM237 232h3v1h-3zM251 224h5v1h-5zM251 225h1v1h-1zM251 226h1v1h-1zM251 227h4v1h-4zM251 228h1v1h-1zM255 228h1v1h-1zM255 229h1v1h-1zM255 230h1v1h-1zM251 231h1v1h-1zM255 231h1v1h-1zM252 232h3v1h-3zM258 232h1v1h-1zM257 233h1v1h-1zM261 224h3v1h-3zM260 225h1v1h-1zM264 225h1v1h-1zM260 226h1v1h-1zM260 227h1v1h-1zM260 228h4v1h-4zM260 229h1v1h-1zM264 229h1v1h-1zM260 230h1v1h-1zM264 230h1v1h-1zM260 231h1v1h-1zM264 231h1v1h-1zM261 232h3v1h-3zM267 224h3v1h-3zM266 225h1v1h-1zM270 225h1v1h-1zM266 226h1v1h-1zM270 226h1v1h-1zM266 227h1v1h-1zM270 227h1v1h-1zM266 228h1v1h-1zM270 228h1v1h-1zM266 229h1v1h-1zM270 229h1v1h-1zM266 230h1v1h-1zM270 230h1v1h-1zM266 231h1v1h-1zM270 231h1v1h-1zM267 232h3v1h-3zM8 241h3v1h-3zM7 242h1v1h-1zM11 242h1v1h-1zM11 243h1v1h-1zM11 244h1v1h-1zM10 245h1v1h-1zM9 246h1v1h-1zM8 247h1v1h-1zM7 248h1v1h-1zM7 249h5v1h-5zM16 241h1v1h-1zM15 242h2v1h-2zM15 243h2v1h-2zM14 244h1v1h-1zM16 244h1v1h-1zM14 245h1v1h-1zM16 245h1v1h-1zM13 246h1v1h-1zM16 246h1v1h-1zM13 247h5v1h-5zM16 248h1v1h-1zM16 249h1v1h-1zM19 249h1v1h-1zM23 241h3v1h-3zM22 242h1v1h-1zM26 242h1v1h-1zM22 243h1v1h-1zM26 243h1v1h-1zM22 244h1v1h-1zM26 244h1v1h-1zM22 245h1v1h-1zM26 245h1v1h-1zM22 246h1v1h-1zM26 246h1v1h-1zM22 247h1v1h-1zM26 247h1v1h-1zM22 248h1v1h-1zM26 248h1v1h-1zM23 249h3v1h-3zM28 241h5v1h-5zM28 242h1v1h-1zM28 243h1v1h-1zM28 244h4v1h-4zM28 245h1v1h-1zM32 245h1v1h-1zM32 246h1v1h-1zM32 247h1v1h-1zM28 248h1v1h-1zM32 248h1v1h-1zM29 249h3v1h-3zM34 249h1v1h-1zM38 241h3v1h-3zM37 242h1v1h-1zM41 242h1v1h-1zM41 243h1v1h-1zM41 244h1v1h-1zM40 245h1v1h-1zM39 246h1v1h-1zM38 247h1v1h-1zM37 248h1v1h-1zM37 249h5v1h-5zM44 241h3v1h-3zM43 242h1v1h-1zM47 242h1v1h-1zM43 243h1v1h-1zM47 243h1v1h-1zM43 244h1v1h-1zM47 244h1v1h-1zM43 245h1v1h-1zM47 245h1v1h-1zM43 246h1v1h-1zM47 246h1v1h-1zM43 247h1v1h-1zM47 247h1v1h-1zM43 248h1v1h-1zM47 248h1v1h-1zM44 249h3v1h-3zM50 241h3v1h-3zM49 242h1v1h-1zM53 242h1v1h-1zM49 243h1v1h-1zM53 243h1v1h-1zM49 244h1v1h-1zM53 244h1v1h-1zM49 245h1v1h-1zM53 245h1v1h-1zM49 246h1v1h-1zM53 246h1v1h-1zM49 247h1v1h-1zM53 247h1v1h-1zM49 248h1v1h-1zM53 248h1v1h-1zM50 249h3v1h-3zM57 241h1v1h-1zM55 242h3v1h-3zM57 243h1v1h-1zM57 244h1v1h-1zM57 245h1v1h-1zM57 246h1v1h-1zM57 247h1v1h-1zM57 248h1v1h-1zM57 249h1v1h-1zM71 241h5v1h-5zM71 242h1v1h-1zM71 243h1v1h-1zM71 244h4v1h-4zM71 245h1v1h-1zM75 245h1v1h-1zM75 246h1v1h-1zM75 247h1v1h-1zM71 248h1v1h-1zM75 248h1v1h-1zM72 249h3v1h-3zM78 249h1v1h-1zM77 250h1v1h-1zM83 241h1v1h-1zM82 242h2v1h-2zM82 243h2v1h-2zM81 244h1v1h-1zM83 244h1v1h-1zM81 245h1v1h-1zM83 245h1v1h-1zM80 246h1v1h-1zM83 246h1v1h-1zM80 247h5v1h-5zM83 248h1v1h-1zM83 249h1v1h-1zM87 241h3v1h-3zM86 242h1v1h-1zM90 242h1v1h-1zM86 243h1v1h-1zM90 243h1v1h-1zM86 244h1v1h-1zM90 244h1v1h-1zM86 245h1v1h-1zM90 245h1v1h-1zM86 246h1v1h-1zM90 246h1v1h-1zM86 247h1v1h-1zM90 247h1v1h-1zM86 248h1v1h-1zM90 248h1v1h-1zM87 249h3v1h-3zM107 241h5v1h-5zM107 242h1v1h-1zM107 243h1v1h-1zM107 244h4v1h-4zM107 245h1v1h-1zM111 245h1v1h-1zM111 246h1v1h-1zM111 247h1v1h-1zM107 248h1v1h-1zM111 248h1v1h-1zM108 249h3v1h-3zM114 249h1v1h-1zM113 250h1v1h-1zM119 241h1v1h-1zM118 242h2v1h-2zM118 243h2v1h-2zM117 244h1v1h-1zM119 244h1v1h-1zM117 245h1v1h-1zM119 245h1v1h-1zM116 246h1v1h-1zM119 246h1v1h-1zM116 247h5v1h-5zM119 248h1v1h-1zM119 249h1v1h-1zM122 241h5v1h-5zM122 242h1v1h-1zM122 243h1v1h-1zM122 244h4v1h-4zM122 245h1v1h-1zM126 245h1v1h-1zM126 246h1v1h-1zM126 247h1v1h-1zM122 248h1v1h-1zM126 248h1v1h-1zM123 249h3v1h-3zM129 241h3v1h-3zM128 242h1v1h-1zM132 242h1v1h-1zM128 243h1v1h-1zM128 244h1v1h-1zM128 245h4v1h-4zM128 246h1v1h-1zM132 246h1v1h-1zM128 247h1v1h-1zM132 247h1v1h-1zM128 248h1v1h-1zM132 248h1v1h-1zM129 249h3v1h-3zM143 241h5v1h-5zM143 242h1v1h-1zM143 243h1v1h-1zM143 244h4v1h-4zM143 245h1v1h-1zM147 245h1v1h-1zM147 246h1v1h-1zM147 247h1v1h-1zM143 248h1v1h-1zM147 248h1v1h-1zM144 249h3v1h-3zM150 249h1v1h-1zM149 250h1v1h-1zM152 241h5v1h-5zM152 242h1v1h-1zM152 243h1v1h-1zM152 244h4v1h-4zM152 245h1v1h-1zM156 245h1v1h-1zM156 246h1v1h-1zM156 247h1v1h-1zM152 248h1v1h-1zM156 248h1v1h-1zM153 249h3v1h-3zM159 241h3v1h-3zM158 242h1v1h-1zM162 242h1v1h-1zM162 243h1v1h-1zM162 244h1v1h-1zM160 245h2v1h-2zM162 246h1v1h-1zM162 247h1v1h-1zM158 248h1v1h-1zM162 248h1v1h-1zM159 249h3v1h-3zM179 241h5v1h-5zM179 242h1v1h-1zM179 243h1v1h-1zM179 244h4v1h-4zM179 245h1v1h-1zM183 245h1v1h-1zM183 246h1v1h-1zM183 247h1v1h-1zM179 248h1v1h-1zM183 248h1v1h-1zM180 249h3v1h-3zM186 249h1v1h-1zM185 250h1v1h-1zM191 241h1v1h-1zM190 242h2v1h-2zM190 243h2v1h-2zM189 244h1v1h-1zM191 244h1v1h-1zM189 245h1v1h-1zM191 245h1v1h-1zM188 246h1v1h-1zM191 246h1v1h-1zM188 247h5v1h-5zM191 248h1v1h-1zM191 249h1v1h-1zM195 241h3v1h-3zM194 242h1v1h-1zM198 242h1v1h-1zM194 243h1v1h-1zM198 243h1v1h-1zM194 244h1v1h-1zM198 244h1v1h-1zM195 245h4v1h-4zM198 246h1v1h-1zM198 247h1v1h-1zM194 248h1v1h-1zM198 248h1v1h-1zM195 249h3v1h-3zM215 241h5v1h-5zM215 242h1v1h-1zM215 243h1v1h-1zM215 244h4v1h-4zM215 245h1v1h-1zM219 245h1v1h-1zM219 246h1v1h-1zM219 247h1v1h-1zM215 248h1v1h-1zM219 248h1v1h-1zM216 249h3v1h-3zM222 249h1v1h-1zM221 250h1v1h-1zM224 241h5v1h-5zM224 242h1v1h-1zM224 243h1v1h-1zM224 244h4v1h-4zM224 245h1v1h-1zM228 245h1v1h-1zM228 246h1v1h-1zM228 247h1v1h-1zM224 248h1v1h-1zM228 248h1v1h-1zM225 249h3v1h-3zM233 241h1v1h-1zM232 242h2v1h-2zM232 243h2v1h-2zM231 244h1v1h-1zM233 244h1v1h-1zM231 245h1v1h-1zM233 245h1v1h-1zM230 246h1v1h-1zM233 246h1v1h-1zM230 247h5v1h-5zM233 248h1v1h-1zM233 249h1v1h-1zM236 241h5v1h-5zM240 242h1v1h-1zM239 243h1v1h-1zM239 244h1v1h-1zM238 245h1v1h-1zM238 246h1v1h-1zM237 247h1v1h-1zM237 248h1v1h-1zM237 249h1v1h-1zM251 241h5v1h-5zM251 242h1v1h-1zM251 243h1v1h-1zM251 244h4v1h-4zM251 245h1v1h-1zM255 245h1v1h-1zM255 246h1v1h-1zM255 247h1v1h-1zM251 248h1v1h-1zM255 248h1v1h-1zM252 249h3v1h-3zM258 249h1v1h-1zM257 250h1v1h-1zM261 241h3v1h-3zM260 242h1v1h-1zM264 242h1v1h-1zM260 243h1v1h-1zM260 244h1v1h-1zM260 245h4v1h-4zM260 246h1v1h-1zM264 246h1v1h-1zM260 247h1v1h-1zM264 247h1v1h-1zM260 248h1v1h-1zM264 248h1v1h-1zM261 249h3v1h-3zM267 241h3v1h-3zM266 242h1v1h-1zM270 242h1v1h-1zM266 243h1v1h-1zM270 243h1v1h-1zM266 244h1v1h-1zM270 244h1v1h-1zM266 245h1v1h-1zM270 245h1v1h-1zM266 246h1v1h-1zM270 246h1v1h-1zM266 247h1v1h-1zM270 247h1v1h-1zM266 248h1v1h-1zM270 248h1v1h-1zM267 249h3v1h-3zM8 258h3v1h-3zM7 259h1v1h-1zM11 259h1v1h-1zM11 260h1v1h-1zM11 261h1v1h-1zM10 262h1v1h-1zM9 263h1v1h-1zM8 264h1v1h-1zM7 265h1v1h-1zM7 266h5v1h-5zM13 258h5v1h-5zM13 259h1v1h-1zM13 260h1v1h-1zM13 261h4v1h-4zM13 262h1v1h-1zM17 262h1v1h-1zM17 263h1v1h-1zM17 264h1v1h-1zM13 265h1v1h-1zM17 265h1v1h-1zM14 266h3v1h-3zM19 266h1v1h-1zM23 258h3v1h-3zM22 259h1v1h-1zM26 259h1v1h-1zM22 260h1v1h-1zM26 260h1v1h-1zM22 261h1v1h-1zM26 261h1v1h-1zM22 262h1v1h-1zM26 262h1v1h-1zM22 263h1v1h-1zM26 263h1v1h-1zM22 264h1v1h-1zM26 264h1v1h-1zM22 265h1v1h-1zM26 265h1v1h-1zM23 266h3v1h-3zM28 258h5v1h-5zM28 259h1v1h-1zM28 260h1v1h-1zM28 261h4v1h-4zM28 262h1v1h-1zM32 262h1v1h-1zM32 263h1v1h-1zM32 264h1v1h-1zM28 265h1v1h-1zM32 265h1v1h-1zM29 266h3v1h-3zM34 266h1v1h-1zM38 258h3v1h-3zM37 259h1v1h-1zM41 259h1v1h-1zM41 260h1v1h-1zM41 261h1v1h-1zM40 262h1v1h-1zM39 263h1v1h-1zM38 264h1v1h-1zM37 265h1v1h-1zM37 266h5v1h-5zM44 258h3v1h-3zM43 259h1v1h-1zM47 259h1v1h-1zM43 260h1v1h-1zM47 260h1v1h-1zM43 261h1v1h-1zM47 261h1v1h-1zM43 262h1v1h-1zM47 262h1v1h-1zM43 263h1v1h-1zM47 263h1v1h-1zM43 264h1v1h-1zM47 264h1v1h-1zM43 265h1v1h-1zM47 265h1v1h-1zM44 266h3v1h-3zM50 258h3v1h-3zM49 259h1v1h-1zM53 259h1v1h-1zM49 260h1v1h-1zM53 260h1v1h-1zM49 261h1v1h-1zM53 261h1v1h-1zM49 262h1v1h-1zM53 262h1v1h-1zM49 263h1v1h-1zM53 263h1v1h-1zM49 264h1v1h-1zM53 264h1v1h-1zM49 265h1v1h-1zM53 265h1v1h-1zM50 266h3v1h-3zM57 258h1v1h-1zM55 259h3v1h-3zM57 260h1v1h-1zM57 261h1v1h-1zM57 262h1v1h-1zM57 263h1v1h-1zM57 264h1v1h-1zM57 265h1v1h-1zM57 266h1v1h-1zM71 258h5v1h-5zM71 259h1v1h-1zM71 260h1v1h-1zM71 261h4v1h-4zM71 262h1v1h-1zM75 262h1v1h-1zM75 263h1v1h-1zM75 264h1v1h-1zM71 265h1v1h-1zM75 265h1v1h-1zM72 266h3v1h-3zM78 266h1v1h-1zM77 267h1v1h-1zM83 258h1v1h-1zM82 259h2v1h-2zM82 260h2v1h-2zM81 261h1v1h-1zM83 261h1v1h-1zM81 262h1v1h-1zM83 262h1v1h-1zM80 263h1v1h-1zM83 263h1v1h-1zM80 264h5v1h-5zM83 265h1v1h-1zM83 266h1v1h-1zM87 258h3v1h-3zM86 259h1v1h-1zM90 259h1v1h-1zM86 260h1v1h-1zM90 260h1v1h-1zM86 261h1v1h-1zM90 261h1v1h-1zM86 262h1v1h-1zM90 262h1v1h-1zM86 263h1v1h-1zM90 263h1v1h-1zM86 264h1v1h-1zM90 264h1v1h-1zM86 265h1v1h-1zM90 265h1v1h-1zM87 266h3v1h-3zM107 258h5v1h-5zM107 259h1v1h-1zM107 260h1v1h-1zM107 261h4v1h-4zM107 262h1v1h-1zM111 262h1v1h-1zM111 263h1v1h-1zM111 264h1v1h-1zM107 265h1v1h-1zM111 265h1v1h-1zM108 266h3v1h-3zM114 266h1v1h-1zM113 267h1v1h-1zM119 258h1v1h-1zM118 259h2v1h-2zM118 260h2v1h-2zM117 261h1v1h-1zM119 261h1v1h-1zM117 262h1v1h-1zM119 262h1v1h-1zM116 263h1v1h-1zM119 263h1v1h-1zM116 264h5v1h-5zM119 265h1v1h-1zM119 266h1v1h-1zM122 258h5v1h-5zM122 259h1v1h-1zM122 260h1v1h-1zM122 261h4v1h-4zM122 262h1v1h-1zM126 262h1v1h-1zM126 263h1v1h-1zM126 264h1v1h-1zM122 265h1v1h-1zM126 265h1v1h-1zM123 266h3v1h-3zM143 258h5v1h-5zM143 259h1v1h-1zM143 260h1v1h-1zM143 261h4v1h-4zM143 262h1v1h-1zM147 262h1v1h-1zM147 263h1v1h-1zM147 264h1v1h-1zM143 265h1v1h-1zM147 265h1v1h-1zM144 266h3v1h-3zM150 266h1v1h-1zM149 267h1v1h-1zM152 258h5v1h-5zM152 259h1v1h-1zM152 260h1v1h-1zM152 261h4v1h-4zM152 262h1v1h-1zM156 262h1v1h-1zM156 263h1v1h-1zM156 264h1v1h-1zM152 265h1v1h-1zM156 265h1v1h-1zM153 266h3v1h-3zM159 258h3v1h-3zM158 259h1v1h-1zM162 259h1v1h-1zM162 260h1v1h-1zM162 261h1v1h-1zM160 262h2v1h-2zM162 263h1v1h-1zM162 264h1v1h-1zM158 265h1v1h-1zM162 265h1v1h-1zM159 266h3v1h-3zM179 258h5v1h-5zM179 259h1v1h-1zM179 260h1v1h-1zM179 261h4v1h-4zM179 262h1v1h-1zM183 262h1v1h-1zM183 263h1v1h-1zM183 264h1v1h-1zM179 265h1v1h-1zM183 265h1v1h-1zM180 266h3v1h-3zM186 266h1v1h-1zM185 267h1v1h-1zM191 258h1v1h-1zM190 259h2v1h-2zM190 260h2v1h-2zM189 261h1v1h-1zM191 261h1v1h-1zM189 262h1v1h-1zM191 262h1v1h-1zM188 263h1v1h-1zM191 263h1v1h-1zM188 264h5v1h-5zM191 265h1v1h-1zM191 266h1v1h-1zM195 258h3v1h-3zM194 259h1v1h-1zM198 259h1v1h-1zM194 260h1v1h-1zM198 260h1v1h-1zM194 261h1v1h-1zM198 261h1v1h-1zM195 262h4v1h-4zM198 263h1v1h-1zM198 264h1v1h-1zM194 265h1v1h-1zM198 265h1v1h-1zM195 266h3v1h-3zM215 258h5v1h-5zM215 259h1v1h-1zM215 260h1v1h-1zM215 261h4v1h-4zM215 262h1v1h-1zM219 262h1v1h-1zM219 263h1v1h-1zM219 264h1v1h-1zM215 265h1v1h-1zM219 265h1v1h-1zM216 266h3v1h-3zM222 266h1v1h-1zM221 267h1v1h-1zM224 258h5v1h-5zM224 259h1v1h-1zM224 260h1v1h-1zM224 261h4v1h-4zM224 262h1v1h-1zM228 262h1v1h-1zM228 263h1v1h-1zM228 264h1v1h-1zM224 265h1v1h-1zM228 265h1v1h-1zM225 266h3v1h-3zM233 258h1v1h-1zM232 259h2v1h-2zM232 260h2v1h-2zM231 261h1v1h-1zM233 261h1v1h-1zM231 262h1v1h-1zM233 262h1v1h-1zM230 263h1v1h-1zM233 263h1v1h-1zM230 264h5v1h-5zM233 265h1v1h-1zM233 266h1v1h-1zM236 258h5v1h-5zM236 259h1v1h-1zM236 260h1v1h-1zM236 261h4v1h-4zM236 262h1v1h-1zM240 262h1v1h-1zM240 263h1v1h-1zM240 264h1v1h-1zM236 265h1v1h-1zM240 265h1v1h-1zM237 266h3v1h-3zM251 258h5v1h-5zM251 259h1v1h-1zM251 260h1v1h-1zM251 261h4v1h-4zM251 262h1v1h-1zM255 262h1v1h-1zM255 263h1v1h-1zM255 264h1v1h-1zM251 265h1v1h-1zM255 265h1v1h-1zM252 266h3v1h-3zM258 266h1v1h-1zM257 267h1v1h-1zM261 258h3v1h-3zM260 259h1v1h-1zM264 259h1v1h-1zM260 260h1v1h-1zM260 261h1v1h-1zM260 262h4v1h-4zM260 263h1v1h-1zM264 263h1v1h-1zM260 264h1v1h-1zM264 264h1v1h-1zM260 265h1v1h-1zM264 265h1v1h-1zM261 266h3v1h-3zM267 258h3v1h-3zM266 259h1v1h-1zM270 259h1v1h-1zM266 260h1v1h-1zM270 260h1v1h-1zM266 261h1v1h-1zM270 261h1v1h-1zM266 262h1v1h-1zM270 262h1v1h-1zM266 263h1v1h-1zM270 263h1v1h-1zM266 264h1v1h-1zM270 264h1v1h-1zM266 265h1v1h-1zM270 265h1v1h-1zM267 266h3v1h-3zM8 275h3v1h-3zM7 276h1v1h-1zM11 276h1v1h-1zM11 277h1v1h-1zM11 278h1v1h-1zM10 279h1v1h-1zM9 280h1v1h-1zM8 281h1v1h-1zM7 282h1v1h-1zM7 283h5v1h-5zM14 275h3v1h-3zM13 276h1v1h-1zM17 276h1v1h-1zM13 277h1v1h-1zM17 277h1v1h-1zM13 278h1v1h-1zM17 278h1v1h-1zM14 279h3v1h-3zM13 280h1v1h-1zM17 280h1v1h-1zM13 281h1v1h-1zM17 281h1v1h-1zM13 282h1v1h-1zM17 282h1v1h-1zM14 283h3v1h-3zM19 283h1v1h-1zM23 275h3v1h-3zM22 276h1v1h-1zM26 276h1v1h-1zM22 277h1v1h-1zM26 277h1v1h-1zM22 278h1v1h-1zM26 278h1v1h-1zM22 279h1v1h-1zM26 279h1v1h-1zM22 280h1v1h-1zM26 280h1v1h-1zM22 281h1v1h-1zM26 281h1v1h-1zM22 282h1v1h-1zM26 282h1v1h-1zM23 283h3v1h-3zM28 275h5v1h-5zM28 276h1v1h-1zM28 277h1v1h-1zM28 278h4v1h-4zM28 279h1v1h-1zM32 279h1v1h-1zM32 280h1v1h-1zM32 281h1v1h-1zM28 282h1v1h-1zM32 282h1v1h-1zM29 283h3v1h-3zM34 283h1v1h-1zM38 275h3v1h-3zM37 276h1v1h-1zM41 276h1v1h-1zM41 277h1v1h-1zM41 278h1v1h-1zM40 279h1v1h-1zM39 280h1v1h-1zM38 281h1v1h-1zM37 282h1v1h-1zM37 283h5v1h-5zM44 275h3v1h-3zM43 276h1v1h-1zM47 276h1v1h-1zM43 277h1v1h-1zM47 277h1v1h-1zM43 278h1v1h-1zM47 278h1v1h-1zM43 279h1v1h-1zM47 279h1v1h-1zM43 280h1v1h-1zM47 280h1v1h-1zM43 281h1v1h-1zM47 281h1v1h-1zM43 282h1v1h-1zM47 282h1v1h-1zM44 283h3v1h-3zM50 275h3v1h-3zM49 276h1v1h-1zM53 276h1v1h-1zM49 277h1v1h-1zM53 277h1v1h-1zM49 278h1v1h-1zM53 278h1v1h-1zM49 279h1v1h-1zM53 279h1v1h-1zM49 280h1v1h-1zM53 280h1v1h-1zM49 281h1v1h-1zM53 281h1v1h-1zM49 282h1v1h-1zM53 282h1v1h-1zM50 283h3v1h-3zM57 275h1v1h-1zM55 276h3v1h-3zM57 277h1v1h-1zM57 278h1v1h-1zM57 279h1v1h-1zM57 280h1v1h-1zM57 281h1v1h-1zM57 282h1v1h-1zM57 283h1v1h-1zM71 275h5v1h-5zM71 276h1v1h-1zM71 277h1v1h-1zM71 278h4v1h-4zM71 279h1v1h-1zM75 279h1v1h-1zM75 280h1v1h-1zM75 281h1v1h-1zM71 282h1v1h-1zM75 282h1v1h-1zM72 283h3v1h-3zM78 283h1v1h-1zM77 284h1v1h-1zM83 275h1v1h-1zM82 276h2v1h-2zM82 277h2v1h-2zM81 278h1v1h-1zM83 278h1v1h-1zM81 279h1v1h-1zM83 279h1v1h-1zM80 280h1v1h-1zM83 280h1v1h-1zM80 281h5v1h-5zM83 282h1v1h-1zM83 283h1v1h-1zM87 275h3v1h-3zM86 276h1v1h-1zM90 276h1v1h-1zM90 277h1v1h-1zM90 278h1v1h-1zM89 279h1v1h-1zM88 280h1v1h-1zM87 281h1v1h-1zM86 282h1v1h-1zM86 283h5v1h-5zM107 275h5v1h-5zM107 276h1v1h-1zM107 277h1v1h-1zM107 278h4v1h-4zM107 279h1v1h-1zM111 279h1v1h-1zM111 280h1v1h-1zM111 281h1v1h-1zM107 282h1v1h-1zM111 282h1v1h-1zM108 283h3v1h-3zM114 283h1v1h-1zM113 284h1v1h-1zM119 275h1v1h-1zM118 276h2v1h-2zM118 277h2v1h-2zM117 278h1v1h-1zM119 278h1v1h-1zM117 279h1v1h-1zM119 279h1v1h-1zM116 280h1v1h-1zM119 280h1v1h-1zM116 281h5v1h-5zM119 282h1v1h-1zM119 283h1v1h-1zM122 275h5v1h-5zM122 276h1v1h-1zM122 277h1v1h-1zM122 278h4v1h-4zM122 279h1v1h-1zM126 279h1v1h-1zM126 280h1v1h-1zM126 281h1v1h-1zM122 282h1v1h-1zM126 282h1v1h-1zM123 283h3v1h-3zM128 275h5v1h-5zM132 276h1v1h-1zM131 277h1v1h-1zM131 278h1v1h-1zM130 279h1v1h-1zM130 280h1v1h-1zM129 281h1v1h-1zM129 282h1v1h-1zM129 283h1v1h-1zM143 275h5v1h-5zM143 276h1v1h-1zM143 277h1v1h-1zM143 278h4v1h-4zM143 279h1v1h-1zM147 279h1v1h-1zM147 280h1v1h-1zM147 281h1v1h-1zM143 282h1v1h-1zM147 282h1v1h-1zM144 283h3v1h-3zM150 283h1v1h-1zM149 284h1v1h-1zM152 275h5v1h-5zM152 276h1v1h-1zM152 277h1v1h-1zM152 278h4v1h-4zM152 279h1v1h-1zM156 279h1v1h-1zM156 280h1v1h-1zM156 281h1v1h-1zM152 282h1v1h-1zM156 282h1v1h-1zM153 283h3v1h-3zM160 275h1v1h-1zM158 276h3v1h-3zM160 277h1v1h-1zM160 278h1v1h-1zM160 279h1v1h-1zM160 280h1v1h-1zM160 281h1v1h-1zM160 282h1v1h-1zM160 283h1v1h-1zM179 275h5v1h-5zM179 276h1v1h-1zM179 277h1v1h-1zM179 278h4v1h-4zM179 279h1v1h-1zM183 279h1v1h-1zM183 280h1v1h-1zM183 281h1v1h-1zM179 282h1v1h-1zM183 282h1v1h-1zM180 283h3v1h-3zM186 283h1v1h-1zM185 284h1v1h-1zM188 275h5v1h-5zM188 276h1v1h-1zM188 277h1v1h-1zM188 278h4v1h-4zM188 279h1v1h-1zM192 279h1v1h-1zM192 280h1v1h-1zM192 281h1v1h-1zM188 282h1v1h-1zM192 282h1v1h-1zM189 283h3v1h-3zM196 275h1v1h-1zM194 276h3v1h-3zM196 277h1v1h-1zM196 278h1v1h-1zM196 279h1v1h-1zM196 280h1v1h-1zM196 281h1v1h-1zM196 282h1v1h-1zM196 283h1v1h-1zM215 275h5v1h-5zM215 276h1v1h-1zM215 277h1v1h-1zM215 278h4v1h-4zM215 279h1v1h-1zM219 279h1v1h-1zM219 280h1v1h-1zM219 281h1v1h-1zM215 282h1v1h-1zM219 282h1v1h-1zM216 283h3v1h-3zM222 283h1v1h-1zM221 284h1v1h-1zM224 275h5v1h-5zM224 276h1v1h-1zM224 277h1v1h-1zM224 278h4v1h-4zM224 279h1v1h-1zM228 279h1v1h-1zM228 280h1v1h-1zM228 281h1v1h-1zM224 282h1v1h-1zM228 282h1v1h-1zM225 283h3v1h-3zM233 275h1v1h-1zM232 276h2v1h-2zM232 277h2v1h-2zM231 278h1v1h-1zM233 278h1v1h-1zM231 279h1v1h-1zM233 279h1v1h-1zM230 280h1v1h-1zM233 280h1v1h-1zM230 281h5v1h-5zM233 282h1v1h-1zM233 283h1v1h-1zM237 275h3v1h-3zM236 276h1v1h-1zM240 276h1v1h-1zM236 277h1v1h-1zM240 277h1v1h-1zM236 278h1v1h-1zM240 278h1v1h-1zM237 279h3v1h-3zM236 280h1v1h-1zM240 280h1v1h-1zM236 281h1v1h-1zM240 281h1v1h-1zM236 282h1v1h-1zM240 282h1v1h-1zM237 283h3v1h-3zM251 275h5v1h-5zM251 276h1v1h-1zM251 277h1v1h-1zM251 278h4v1h-4zM251 279h1v1h-1zM255 279h1v1h-1zM255 280h1v1h-1zM255 281h1v1h-1zM251 282h1v1h-1zM255 282h1v1h-1zM252 283h3v1h-3zM258 283h1v1h-1zM257 284h1v1h-1zM261 275h3v1h-3zM260 276h1v1h-1zM264 276h1v1h-1zM260 277h1v1h-1zM260 278h1v1h-1zM260 279h4v1h-4zM260 280h1v1h-1zM264 280h1v1h-1zM260 281h1v1h-1zM264 281h1v1h-1zM260 282h1v1h-1zM264 282h1v1h-1zM261 283h3v1h-3zM267 275h3v1h-3zM266 276h1v1h-1zM270 276h1v1h-1zM266 277h1v1h-1zM270 277h1v1h-1zM266 278h1v1h-1zM270 278h1v1h-1zM266 279h1v1h-1zM270 279h1v1h-1zM266 280h1v1h-1zM270 280h1v1h-1zM266 281h1v1h-1zM270 281h1v1h-1zM266 282h1v1h-1zM270 282h1v1h-1zM267 283h3v1h-3zM8 292h3v1h-3zM7 293h1v1h-1zM11 293h1v1h-1zM11 294h1v1h-1zM11 295h1v1h-1zM10 296h1v1h-1zM9 297h1v1h-1zM8 298h1v1h-1zM7 299h1v1h-1zM7 300h5v1h-5zM14 292h3v1h-3zM13 293h1v1h-1zM17 293h1v1h-1zM13 294h1v1h-1zM17 294h1v1h-1zM13 295h1v1h-1zM17 295h1v1h-1zM14 296h4v1h-4zM17 297h1v1h-1zM17 298h1v1h-1zM13 299h1v1h-1zM17 299h1v1h-1zM14 300h3v1h-3zM19 300h1v1h-1zM23 292h3v1h-3zM22 293h1v1h-1zM26 293h1v1h-1zM22 294h1v1h-1zM26 294h1v1h-1zM22 295h1v1h-1zM26 295h1v1h-1zM22 296h1v1h-1zM26 296h1v1h-1zM22 297h1v1h-1zM26 297h1v1h-1zM22 298h1v1h-1zM26 298h1v1h-1zM22 299h1v1h-1zM26 299h1v1h-1zM23 300h3v1h-3zM28 292h5v1h-5zM28 293h1v1h-1zM28 294h1v1h-1zM28 295h4v1h-4zM28 296h1v1h-1zM32 296h1v1h-1zM32 297h1v1h-1zM32 298h1v1h-1zM28 299h1v1h-1zM32 299h1v1h-1zM29 300h3v1h-3zM34 300h1v1h-1zM38 292h3v1h-3zM37 293h1v1h-1zM41 293h1v1h-1zM41 294h1v1h-1zM41 295h1v1h-1zM40 296h1v1h-1zM39 297h1v1h-1zM38 298h1v1h-1zM37 299h1v1h-1zM37 300h5v1h-5zM44 292h3v1h-3zM43 293h1v1h-1zM47 293h1v1h-1zM43 294h1v1h-1zM47 294h1v1h-1zM43 295h1v1h-1zM47 295h1v1h-1zM43 296h1v1h-1zM47 296h1v1h-1zM43 297h1v1h-1zM47 297h1v1h-1zM43 298h1v1h-1zM47 298h1v1h-1zM43 299h1v1h-1zM47 299h1v1h-1zM44 300h3v1h-3zM50 292h3v1h-3zM49 293h1v1h-1zM53 293h1v1h-1zM49 294h1v1h-1zM53 294h1v1h-1zM49 295h1v1h-1zM53 295h1v1h-1zM49 296h1v1h-1zM53 296h1v1h-1zM49 297h1v1h-1zM53 297h1v1h-1zM49 298h1v1h-1zM53 298h1v1h-1zM49 299h1v1h-1zM53 299h1v1h-1zM50 300h3v1h-3zM57 292h1v1h-1zM55 293h3v1h-3zM57 294h1v1h-1zM57 295h1v1h-1zM57 296h1v1h-1zM57 297h1v1h-1zM57 298h1v1h-1zM57 299h1v1h-1zM57 300h1v1h-1zM71 292h5v1h-5zM71 293h1v1h-1zM71 294h1v1h-1zM71 295h4v1h-4zM71 296h1v1h-1zM75 296h1v1h-1zM75 297h1v1h-1zM75 298h1v1h-1zM71 299h1v1h-1zM75 299h1v1h-1zM72 300h3v1h-3zM78 300h1v1h-1zM77 301h1v1h-1zM83 292h1v1h-1zM82 293h2v1h-2zM82 294h2v1h-2zM81 295h1v1h-1zM83 295h1v1h-1zM81 296h1v1h-1zM83 296h1v1h-1zM80 297h1v1h-1zM83 297h1v1h-1zM80 298h5v1h-5zM83 299h1v1h-1zM83 300h1v1h-1zM87 292h3v1h-3zM86 293h1v1h-1zM90 293h1v1h-1zM86 294h1v1h-1zM90 294h1v1h-1zM86 295h1v1h-1zM90 295h1v1h-1zM86 296h1v1h-1zM90 296h1v1h-1zM86 297h1v1h-1zM90 297h1v1h-1zM86 298h1v1h-1zM90 298h1v1h-1zM86 299h1v1h-1zM90 299h1v1h-1zM87 300h3v1h-3zM107 292h5v1h-5zM107 293h1v1h-1zM107 294h1v1h-1zM107 295h4v1h-4zM107 296h1v1h-1zM111 296h1v1h-1zM111 297h1v1h-1zM111 298h1v1h-1zM107 299h1v1h-1zM111 299h1v1h-1zM108 300h3v1h-3zM114 300h1v1h-1zM113 301h1v1h-1zM119 292h1v1h-1zM118 293h2v1h-2zM118 294h2v1h-2zM117 295h1v1h-1zM119 295h1v1h-1zM117 296h1v1h-1zM119 296h1v1h-1zM116 297h1v1h-1zM119 297h1v1h-1zM116 298h5v1h-5zM119 299h1v1h-1zM119 300h1v1h-1zM125 292h1v1h-1zM124 293h2v1h-2zM124 294h2v1h-2zM123 295h1v1h-1zM125 295h1v1h-1zM123 296h1v1h-1zM125 296h1v1h-1zM122 297h1v1h-1zM125 297h1v1h-1zM122 298h5v1h-5zM125 299h1v1h-1zM125 300h1v1h-1zM129 292h3v1h-3zM128 293h1v1h-1zM132 293h1v1h-1zM128 294h1v1h-1zM128 295h1v1h-1zM128 296h4v1h-4zM128 297h1v1h-1zM132 297h1v1h-1zM128 298h1v1h-1zM132 298h1v1h-1zM128 299h1v1h-1zM132 299h1v1h-1zM129 300h3v1h-3zM143 292h5v1h-5zM143 293h1v1h-1zM143 294h1v1h-1zM143 295h4v1h-4zM143 296h1v1h-1zM147 296h1v1h-1zM147 297h1v1h-1zM147 298h1v1h-1zM143 299h1v1h-1zM147 299h1v1h-1zM144 300h3v1h-3zM150 300h1v1h-1zM149 301h1v1h-1zM152 292h5v1h-5zM152 293h1v1h-1zM152 294h1v1h-1zM152 295h4v1h-4zM152 296h1v1h-1zM156 296h1v1h-1zM156 297h1v1h-1zM156 298h1v1h-1zM152 299h1v1h-1zM156 299h1v1h-1zM153 300h3v1h-3zM159 292h3v1h-3zM158 293h1v1h-1zM162 293h1v1h-1zM162 294h1v1h-1zM162 295h1v1h-1zM160 296h2v1h-2zM162 297h1v1h-1zM162 298h1v1h-1zM158 299h1v1h-1zM162 299h1v1h-1zM159 300h3v1h-3zM179 292h5v1h-5zM179 293h1v1h-1zM179 294h1v1h-1zM179 295h4v1h-4zM179 296h1v1h-1zM183 296h1v1h-1zM183 297h1v1h-1zM183 298h1v1h-1zM179 299h1v1h-1zM183 299h1v1h-1zM180 300h3v1h-3zM186 300h1v1h-1zM185 301h1v1h-1zM191 292h1v1h-1zM190 293h2v1h-2zM190 294h2v1h-2zM189 295h1v1h-1zM191 295h1v1h-1zM189 296h1v1h-1zM191 296h1v1h-1zM188 297h1v1h-1zM191 297h1v1h-1zM188 298h5v1h-5zM191 299h1v1h-1zM191 300h1v1h-1zM195 292h3v1h-3zM194 293h1v1h-1zM198 293h1v1h-1zM194 294h1v1h-1zM198 294h1v1h-1zM194 295h1v1h-1zM198 295h1v1h-1zM195 296h3v1h-3zM194 297h1v1h-1zM198 297h1v1h-1zM194 298h1v1h-1zM198 298h1v1h-1zM194 299h1v1h-1zM198 299h1v1h-1zM195 300h3v1h-3zM215 292h5v1h-5zM215 293h1v1h-1zM215 294h1v1h-1zM215 295h4v1h-4zM215 296h1v1h-1zM219 296h1v1h-1zM219 297h1v1h-1zM219 298h1v1h-1zM215 299h1v1h-1zM219 299h1v1h-1zM216 300h3v1h-3zM222 300h1v1h-1zM221 301h1v1h-1zM224 292h5v1h-5zM224 293h1v1h-1zM224 294h1v1h-1zM224 295h4v1h-4zM224 296h1v1h-1zM228 296h1v1h-1zM228 297h1v1h-1zM228 298h1v1h-1zM224 299h1v1h-1zM228 299h1v1h-1zM225 300h3v1h-3zM233 292h1v1h-1zM232 293h2v1h-2zM232 294h2v1h-2zM231 295h1v1h-1zM233 295h1v1h-1zM231 296h1v1h-1zM233 296h1v1h-1zM230 297h1v1h-1zM233 297h1v1h-1zM230 298h5v1h-5zM233 299h1v1h-1zM233 300h1v1h-1zM237 292h3v1h-3zM236 293h1v1h-1zM240 293h1v1h-1zM240 294h1v1h-1zM240 295h1v1h-1zM239 296h1v1h-1zM238 297h1v1h-1zM237 298h1v1h-1zM236 299h1v1h-1zM236 300h5v1h-5zM251 292h5v1h-5zM251 293h1v1h-1zM251 294h1v1h-1zM251 295h4v1h-4zM251 296h1v1h-1zM255 296h1v1h-1zM255 297h1v1h-1zM255 298h1v1h-1zM251 299h1v1h-1zM255 299h1v1h-1zM252 300h3v1h-3zM258 300h1v1h-1zM257 301h1v1h-1zM261 292h3v1h-3zM260 293h1v1h-1zM264 293h1v1h-1zM260 294h1v1h-1zM260 295h1v1h-1zM260 296h4v1h-4zM260 297h1v1h-1zM264 297h1v1h-1zM260 298h1v1h-1zM264 298h1v1h-1zM260 299h1v1h-1zM264 299h1v1h-1zM261 300h3v1h-3zM267 292h3v1h-3zM266 293h1v1h-1zM270 293h1v1h-1zM266 294h1v1h-1zM270 294h1v1h-1zM266 295h1v1h-1zM270 295h1v1h-1zM266 296h1v1h-1zM270 296h1v1h-1zM266 297h1v1h-1zM270 297h1v1h-1zM266 298h1v1h-1zM270 298h1v1h-1zM266 299h1v1h-1zM270 299h1v1h-1zM267 300h3v1h-3zM8 309h3v1h-3zM7 310h1v1h-1zM11 310h1v1h-1zM11 311h1v1h-1zM11 312h1v1h-1zM9 313h2v1h-2zM11 314h1v1h-1zM11 315h1v1h-1zM7 316h1v1h-1zM11 316h1v1h-1zM8 317h3v1h-3zM14 309h3v1h-3zM13 310h1v1h-1zM17 310h1v1h-1zM13 311h1v1h-1zM17 311h1v1h-1zM13 312h1v1h-1zM17 312h1v1h-1zM13 313h1v1h-1zM17 313h1v1h-1zM13 314h1v1h-1zM17 314h1v1h-1zM13 315h1v1h-1zM17 315h1v1h-1zM13 316h1v1h-1zM17 316h1v1h-1zM14 317h3v1h-3zM19 317h1v1h-1zM23 309h3v1h-3zM22 310h1v1h-1zM26 310h1v1h-1zM22 311h1v1h-1zM26 311h1v1h-1zM22 312h1v1h-1zM26 312h1v1h-1zM22 313h1v1h-1zM26 313h1v1h-1zM22 314h1v1h-1zM26 314h1v1h-1zM22 315h1v1h-1zM26 315h1v1h-1zM22 316h1v1h-1zM26 316h1v1h-1zM23 317h3v1h-3zM28 309h5v1h-5zM28 310h1v1h-1zM28 311h1v1h-1zM28 312h4v1h-4zM28 313h1v1h-1zM32 313h1v1h-1zM32 314h1v1h-1zM32 315h1v1h-1zM28 316h1v1h-1zM32 316h1v1h-1zM29 317h3v1h-3zM34 317h1v1h-1zM38 309h3v1h-3zM37 310h1v1h-1zM41 310h1v1h-1zM41 311h1v1h-1zM41 312h1v1h-1zM40 313h1v1h-1zM39 314h1v1h-1zM38 315h1v1h-1zM37 316h1v1h-1zM37 317h5v1h-5zM44 309h3v1h-3zM43 310h1v1h-1zM47 310h1v1h-1zM43 311h1v1h-1zM47 311h1v1h-1zM43 312h1v1h-1zM47 312h1v1h-1zM43 313h1v1h-1zM47 313h1v1h-1zM43 314h1v1h-1zM47 314h1v1h-1zM43 315h1v1h-1zM47 315h1v1h-1zM43 316h1v1h-1zM47 316h1v1h-1zM44 317h3v1h-3zM50 309h3v1h-3zM49 310h1v1h-1zM53 310h1v1h-1zM49 311h1v1h-1zM53 311h1v1h-1zM49 312h1v1h-1zM53 312h1v1h-1zM49 313h1v1h-1zM53 313h1v1h-1zM49 314h1v1h-1zM53 314h1v1h-1zM49 315h1v1h-1zM53 315h1v1h-1zM49 316h1v1h-1zM53 316h1v1h-1zM50 317h3v1h-3zM57 309h1v1h-1zM55 310h3v1h-3zM57 311h1v1h-1zM57 312h1v1h-1zM57 313h1v1h-1zM57 314h1v1h-1zM57 315h1v1h-1zM57 316h1v1h-1zM57 317h1v1h-1zM71 309h5v1h-5zM71 310h1v1h-1zM71 311h1v1h-1zM71 312h4v1h-4zM71 313h1v1h-1zM75 313h1v1h-1zM75 314h1v1h-1zM75 315h1v1h-1zM71 316h1v1h-1zM75 316h1v1h-1zM72 317h3v1h-3zM78 317h1v1h-1zM77 318h1v1h-1zM81 309h3v1h-3zM80 310h1v1h-1zM84 310h1v1h-1zM84 311h1v1h-1zM84 312h1v1h-1zM82 313h2v1h-2zM84 314h1v1h-1zM84 315h1v1h-1zM80 316h1v1h-1zM84 316h1v1h-1zM81 317h3v1h-3zM87 309h3v1h-3zM86 310h1v1h-1zM90 310h1v1h-1zM86 311h1v1h-1zM90 311h1v1h-1zM86 312h1v1h-1zM90 312h1v1h-1zM87 313h3v1h-3zM86 314h1v1h-1zM90 314h1v1h-1zM86 315h1v1h-1zM90 315h1v1h-1zM86 316h1v1h-1zM90 316h1v1h-1zM87 317h3v1h-3zM107 309h5v1h-5zM107 310h1v1h-1zM107 311h1v1h-1zM107 312h4v1h-4zM107 313h1v1h-1zM111 313h1v1h-1zM111 314h1v1h-1zM111 315h1v1h-1zM107 316h1v1h-1zM111 316h1v1h-1zM108 317h3v1h-3zM114 317h1v1h-1zM113 318h1v1h-1zM119 309h1v1h-1zM118 310h2v1h-2zM118 311h2v1h-2zM117 312h1v1h-1zM119 312h1v1h-1zM117 313h1v1h-1zM119 313h1v1h-1zM116 314h1v1h-1zM119 314h1v1h-1zM116 315h5v1h-5zM119 316h1v1h-1zM119 317h1v1h-1zM125 309h1v1h-1zM124 310h2v1h-2zM124 311h2v1h-2zM123 312h1v1h-1zM125 312h1v1h-1zM123 313h1v1h-1zM125 313h1v1h-1zM122 314h1v1h-1zM125 314h1v1h-1zM122 315h5v1h-5zM125 316h1v1h-1zM125 317h1v1h-1zM129 309h3v1h-3zM128 310h1v1h-1zM132 310h1v1h-1zM132 311h1v1h-1zM132 312h1v1h-1zM130 313h2v1h-2zM132 314h1v1h-1zM132 315h1v1h-1zM128 316h1v1h-1zM132 316h1v1h-1zM129 317h3v1h-3zM143 309h5v1h-5zM143 310h1v1h-1zM143 311h1v1h-1zM143 312h4v1h-4zM143 313h1v1h-1zM147 313h1v1h-1zM147 314h1v1h-1zM147 315h1v1h-1zM143 316h1v1h-1zM147 316h1v1h-1zM144 317h3v1h-3zM150 317h1v1h-1zM149 318h1v1h-1zM152 309h5v1h-5zM152 310h1v1h-1zM152 311h1v1h-1zM152 312h4v1h-4zM152 313h1v1h-1zM156 313h1v1h-1zM156 314h1v1h-1zM156 315h1v1h-1zM152 316h1v1h-1zM156 316h1v1h-1zM153 317h3v1h-3zM159 309h3v1h-3zM158 310h1v1h-1zM162 310h1v1h-1zM162 311h1v1h-1zM162 312h1v1h-1zM160 313h2v1h-2zM162 314h1v1h-1zM162 315h1v1h-1zM158 316h1v1h-1zM162 316h1v1h-1zM159 317h3v1h-3zM179 309h5v1h-5zM179 310h1v1h-1zM179 311h1v1h-1zM179 312h4v1h-4zM179 313h1v1h-1zM183 313h1v1h-1zM183 314h1v1h-1zM183 315h1v1h-1zM179 316h1v1h-1zM183 316h1v1h-1zM180 317h3v1h-3zM186 317h1v1h-1zM185 318h1v1h-1zM191 309h1v1h-1zM190 310h2v1h-2zM190 311h2v1h-2zM189 312h1v1h-1zM191 312h1v1h-1zM189 313h1v1h-1zM191 313h1v1h-1zM188 314h1v1h-1zM191 314h1v1h-1zM188 315h5v1h-5zM191 316h1v1h-1zM191 317h1v1h-1zM195 309h3v1h-3zM194 310h1v1h-1zM198 310h1v1h-1zM194 311h1v1h-1zM198 311h1v1h-1zM194 312h1v1h-1zM198 312h1v1h-1zM195 313h3v1h-3zM194 314h1v1h-1zM198 314h1v1h-1zM194 315h1v1h-1zM198 315h1v1h-1zM194 316h1v1h-1zM198 316h1v1h-1zM195 317h3v1h-3zM215 309h5v1h-5zM215 310h1v1h-1zM215 311h1v1h-1zM215 312h4v1h-4zM215 313h1v1h-1zM219 313h1v1h-1zM219 314h1v1h-1zM219 315h1v1h-1zM215 316h1v1h-1zM219 316h1v1h-1zM216 317h3v1h-3zM222 317h1v1h-1zM221 318h1v1h-1zM224 309h5v1h-5zM224 310h1v1h-1zM224 311h1v1h-1zM224 312h4v1h-4zM224 313h1v1h-1zM228 313h1v1h-1zM228 314h1v1h-1zM228 315h1v1h-1zM224 316h1v1h-1zM228 316h1v1h-1zM225 317h3v1h-3zM233 309h1v1h-1zM232 310h2v1h-2zM232 311h2v1h-2zM231 312h1v1h-1zM233 312h1v1h-1zM231 313h1v1h-1zM233 313h1v1h-1zM230 314h1v1h-1zM233 314h1v1h-1zM230 315h5v1h-5zM233 316h1v1h-1zM233 317h1v1h-1zM251 309h5v1h-5zM251 310h1v1h-1zM251 311h1v1h-1zM251 312h4v1h-4zM251 313h1v1h-1zM255 313h1v1h-1zM255 314h1v1h-1zM255 315h1v1h-1zM251 316h1v1h-1zM255 316h1v1h-1zM252 317h3v1h-3zM258 317h1v1h-1zM257 318h1v1h-1zM261 309h3v1h-3zM260 310h1v1h-1zM264 310h1v1h-1zM260 311h1v1h-1zM260 312h1v1h-1zM260 313h4v1h-4zM260 314h1v1h-1zM264 314h1v1h-1zM260 315h1v1h-1zM264 315h1v1h-1zM260 316h1v1h-1zM264 316h1v1h-1zM261 317h3v1h-3zM267 309h3v1h-3zM266 310h1v1h-1zM270 310h1v1h-1zM266 311h1v1h-1zM270 311h1v1h-1zM266 312h1v1h-1zM270 312h1v1h-1zM266 313h1v1h-1zM270 313h1v1h-1zM266 314h1v1h-1zM270 314h1v1h-1zM266 315h1v1h-1zM270 315h1v1h-1zM266 316h1v1h-1zM270 316h1v1h-1zM267 317h3v1h-3zM8 326h3v1h-3zM7 327h1v1h-1zM11 327h1v1h-1zM11 328h1v1h-1zM11 329h1v1h-1zM9 330h2v1h-2zM11 331h1v1h-1zM11 332h1v1h-1zM7 333h1v1h-1zM11 333h1v1h-1zM8 334h3v1h-3zM15 326h1v1h-1zM13 327h3v1h-3zM15 328h1v1h-1zM15 329h1v1h-1zM15 330h1v1h-1zM15 331h1v1h-1zM15 332h1v1h-1zM15 333h1v1h-1zM15 334h1v1h-1zM19 334h1v1h-1zM23 326h3v1h-3zM22 327h1v1h-1zM26 327h1v1h-1zM22 328h1v1h-1zM26 328h1v1h-1zM22 329h1v1h-1zM26 329h1v1h-1zM22 330h1v1h-1zM26 330h1v1h-1zM22 331h1v1h-1zM26 331h1v1h-1zM22 332h1v1h-1zM26 332h1v1h-1zM22 333h1v1h-1zM26 333h1v1h-1zM23 334h3v1h-3zM28 326h5v1h-5zM28 327h1v1h-1zM28 328h1v1h-1zM28 329h4v1h-4zM28 330h1v1h-1zM32 330h1v1h-1zM32 331h1v1h-1zM32 332h1v1h-1zM28 333h1v1h-1zM32 333h1v1h-1zM29 334h3v1h-3zM34 334h1v1h-1zM38 326h3v1h-3zM37 327h1v1h-1zM41 327h1v1h-1zM41 328h1v1h-1zM41 329h1v1h-1zM40 330h1v1h-1zM39 331h1v1h-1zM38 332h1v1h-1zM37 333h1v1h-1zM37 334h5v1h-5zM44 326h3v1h-3zM43 327h1v1h-1zM47 327h1v1h-1zM43 328h1v1h-1zM47 328h1v1h-1zM43 329h1v1h-1zM47 329h1v1h-1zM43 330h1v1h-1zM47 330h1v1h-1zM43 331h1v1h-1zM47 331h1v1h-1zM43 332h1v1h-1zM47 332h1v1h-1zM43 333h1v1h-1zM47 333h1v1h-1zM44 334h3v1h-3zM50 326h3v1h-3zM49 327h1v1h-1zM53 327h1v1h-1zM49 328h1v1h-1zM53 328h1v1h-1zM49 329h1v1h-1zM53 329h1v1h-1zM49 330h1v1h-1zM53 330h1v1h-1zM49 331h1v1h-1zM53 331h1v1h-1zM49 332h1v1h-1zM53 332h1v1h-1zM49 333h1v1h-1zM53 333h1v1h-1zM50 334h3v1h-3zM57 326h1v1h-1zM55 327h3v1h-3zM57 328h1v1h-1zM57 329h1v1h-1zM57 330h1v1h-1zM57 331h1v1h-1zM57 332h1v1h-1zM57 333h1v1h-1zM57 334h1v1h-1zM71 326h5v1h-5zM71 327h1v1h-1zM71 328h1v1h-1zM71 329h4v1h-4zM71 330h1v1h-1zM75 330h1v1h-1zM75 331h1v1h-1zM75 332h1v1h-1zM71 333h1v1h-1zM75 333h1v1h-1zM72 334h3v1h-3zM78 334h1v1h-1zM77 335h1v1h-1zM81 326h3v1h-3zM80 327h1v1h-1zM84 327h1v1h-1zM84 328h1v1h-1zM84 329h1v1h-1zM82 330h2v1h-2zM84 331h1v1h-1zM84 332h1v1h-1zM80 333h1v1h-1zM84 333h1v1h-1zM81 334h3v1h-3zM87 326h3v1h-3zM86 327h1v1h-1zM90 327h1v1h-1zM86 328h1v1h-1zM90 328h1v1h-1zM86 329h1v1h-1zM90 329h1v1h-1zM87 330h4v1h-4zM90 331h1v1h-1zM90 332h1v1h-1zM86 333h1v1h-1zM90 333h1v1h-1zM87 334h3v1h-3zM107 326h5v1h-5zM107 327h1v1h-1zM107 328h1v1h-1zM107 329h4v1h-4zM107 330h1v1h-1zM111 330h1v1h-1zM111 331h1v1h-1zM111 332h1v1h-1zM107 333h1v1h-1zM111 333h1v1h-1zM108 334h3v1h-3zM114 334h1v1h-1zM113 335h1v1h-1zM119 326h1v1h-1zM118 327h2v1h-2zM118 328h2v1h-2zM117 329h1v1h-1zM119 329h1v1h-1zM117 330h1v1h-1zM119 330h1v1h-1zM116 331h1v1h-1zM119 331h1v1h-1zM116 332h5v1h-5zM119 333h1v1h-1zM119 334h1v1h-1zM123 326h3v1h-3zM122 327h1v1h-1zM126 327h1v1h-1zM126 328h1v1h-1zM126 329h1v1h-1zM124 330h2v1h-2zM126 331h1v1h-1zM126 332h1v1h-1zM122 333h1v1h-1zM126 333h1v1h-1zM123 334h3v1h-3zM129 326h3v1h-3zM128 327h1v1h-1zM132 327h1v1h-1zM128 328h1v1h-1zM132 328h1v1h-1zM128 329h1v1h-1zM132 329h1v1h-1zM129 330h4v1h-4zM132 331h1v1h-1zM132 332h1v1h-1zM128 333h1v1h-1zM132 333h1v1h-1zM129 334h3v1h-3zM143 326h5v1h-5zM143 327h1v1h-1zM143 328h1v1h-1zM143 329h4v1h-4zM143 330h1v1h-1zM147 330h1v1h-1zM147 331h1v1h-1zM147 332h1v1h-1zM143 333h1v1h-1zM147 333h1v1h-1zM144 334h3v1h-3zM150 334h1v1h-1zM149 335h1v1h-1zM152 326h5v1h-5zM152 327h1v1h-1zM152 328h1v1h-1zM152 329h4v1h-4zM152 330h1v1h-1zM156 330h1v1h-1zM156 331h1v1h-1zM156 332h1v1h-1zM152 333h1v1h-1zM156 333h1v1h-1zM153 334h3v1h-3zM160 326h1v1h-1zM158 327h3v1h-3zM160 328h1v1h-1zM160 329h1v1h-1zM160 330h1v1h-1zM160 331h1v1h-1zM160 332h1v1h-1zM160 333h1v1h-1zM160 334h1v1h-1zM179 326h5v1h-5zM179 327h1v1h-1zM179 328h1v1h-1zM179 329h4v1h-4zM179 330h1v1h-1zM183 330h1v1h-1zM183 331h1v1h-1zM183 332h1v1h-1zM179 333h1v1h-1zM183 333h1v1h-1zM180 334h3v1h-3zM186 334h1v1h-1zM185 335h1v1h-1zM191 326h1v1h-1zM190 327h2v1h-2zM190 328h2v1h-2zM189 329h1v1h-1zM191 329h1v1h-1zM189 330h1v1h-1zM191 330h1v1h-1zM188 331h1v1h-1zM191 331h1v1h-1zM188 332h5v1h-5zM191 333h1v1h-1zM191 334h1v1h-1zM195 326h3v1h-3zM194 327h1v1h-1zM198 327h1v1h-1zM194 328h1v1h-1zM198 328h1v1h-1zM194 329h1v1h-1zM198 329h1v1h-1zM195 330h3v1h-3zM194 331h1v1h-1zM198 331h1v1h-1zM194 332h1v1h-1zM198 332h1v1h-1zM194 333h1v1h-1zM198 333h1v1h-1zM195 334h3v1h-3zM215 326h5v1h-5zM215 327h1v1h-1zM215 328h1v1h-1zM215 329h4v1h-4zM215 330h1v1h-1zM219 330h1v1h-1zM219 331h1v1h-1zM219 332h1v1h-1zM215 333h1v1h-1zM219 333h1v1h-1zM216 334h3v1h-3zM222 334h1v1h-1zM221 335h1v1h-1zM224 326h5v1h-5zM224 327h1v1h-1zM224 328h1v1h-1zM224 329h4v1h-4zM224 330h1v1h-1zM228 330h1v1h-1zM228 331h1v1h-1zM228 332h1v1h-1zM224 333h1v1h-1zM228 333h1v1h-1zM225 334h3v1h-3zM231 326h3v1h-3zM230 327h1v1h-1zM234 327h1v1h-1zM234 328h1v1h-1zM234 329h1v1h-1zM232 330h2v1h-2zM234 331h1v1h-1zM234 332h1v1h-1zM230 333h1v1h-1zM234 333h1v1h-1zM231 334h3v1h-3zM239 326h1v1h-1zM238 327h2v1h-2zM238 328h2v1h-2zM237 329h1v1h-1zM239 329h1v1h-1zM237 330h1v1h-1zM239 330h1v1h-1zM236 331h1v1h-1zM239 331h1v1h-1zM236 332h5v1h-5zM239 333h1v1h-1zM239 334h1v1h-1zM251 326h5v1h-5zM251 327h1v1h-1zM251 328h1v1h-1zM251 329h4v1h-4zM251 330h1v1h-1zM255 330h1v1h-1zM255 331h1v1h-1zM255 332h1v1h-1zM251 333h1v1h-1zM255 333h1v1h-1zM252 334h3v1h-3zM258 334h1v1h-1zM257 335h1v1h-1zM261 326h3v1h-3zM260 327h1v1h-1zM264 327h1v1h-1zM260 328h1v1h-1zM260 329h1v1h-1zM260 330h4v1h-4zM260 331h1v1h-1zM264 331h1v1h-1zM260 332h1v1h-1zM264 332h1v1h-1zM260 333h1v1h-1zM264 333h1v1h-1zM261 334h3v1h-3zM267 326h3v1h-3zM266 327h1v1h-1zM270 327h1v1h-1zM266 328h1v1h-1zM270 328h1v1h-1zM266 329h1v1h-1zM270 329h1v1h-1zM266 330h1v1h-1zM270 330h1v1h-1zM266 331h1v1h-1zM270 331h1v1h-1zM266 332h1v1h-1zM270 332h1v1h-1zM266 333h1v1h-1zM270 333h1v1h-1zM267 334h3v1h-3zM71 343h5v1h-5zM71 344h1v1h-1zM71 345h1v1h-1zM71 346h4v1h-4zM71 347h1v1h-1zM75 347h1v1h-1zM75 348h1v1h-1zM75 349h1v1h-1zM71 350h1v1h-1zM75 350h1v1h-1zM72 351h3v1h-3zM78 351h1v1h-1zM77 352h1v1h-1zM83 343h1v1h-1zM82 344h2v1h-2zM82 345h2v1h-2zM81 346h1v1h-1zM83 346h1v1h-1zM81 347h1v1h-1zM83 347h1v1h-1zM80 348h1v1h-1zM83 348h1v1h-1zM80 349h5v1h-5zM83 350h1v1h-1zM83 351h1v1h-1zM87 343h3v1h-3zM86 344h1v1h-1zM90 344h1v1h-1zM86 345h1v1h-1zM90 345h1v1h-1zM86 346h1v1h-1zM90 346h1v1h-1zM86 347h1v1h-1zM90 347h1v1h-1zM86 348h1v1h-1zM90 348h1v1h-1zM86 349h1v1h-1zM90 349h1v1h-1zM86 350h1v1h-1zM90 350h1v1h-1zM87 351h3v1h-3zM107 343h5v1h-5zM107 344h1v1h-1zM107 345h1v1h-1zM107 346h4v1h-4zM107 347h1v1h-1zM111 347h1v1h-1zM111 348h1v1h-1zM111 349h1v1h-1zM107 350h1v1h-1zM111 350h1v1h-1zM108 351h3v1h-3zM114 351h1v1h-1zM113 352h1v1h-1zM119 343h1v1h-1zM118 344h2v1h-2zM118 345h2v1h-2zM117 346h1v1h-1zM119 346h1v1h-1zM117 347h1v1h-1zM119 347h1v1h-1zM116 348h1v1h-1zM119 348h1v1h-1zM116 349h5v1h-5zM119 350h1v1h-1zM119 351h1v1h-1zM125 343h1v1h-1zM124 344h2v1h-2zM124 345h2v1h-2zM123 346h1v1h-1zM125 346h1v1h-1zM123 347h1v1h-1zM125 347h1v1h-1zM122 348h1v1h-1zM125 348h1v1h-1zM122 349h5v1h-5zM125 350h1v1h-1zM125 351h1v1h-1zM143 343h5v1h-5zM143 344h1v1h-1zM143 345h1v1h-1zM143 346h4v1h-4zM143 347h1v1h-1zM147 347h1v1h-1zM147 348h1v1h-1zM147 349h1v1h-1zM143 350h1v1h-1zM147 350h1v1h-1zM144 351h3v1h-3zM150 351h1v1h-1zM149 352h1v1h-1zM152 343h5v1h-5zM152 344h1v1h-1zM152 345h1v1h-1zM152 346h4v1h-4zM152 347h1v1h-1zM156 347h1v1h-1zM156 348h1v1h-1zM156 349h1v1h-1zM152 350h1v1h-1zM156 350h1v1h-1zM153 351h3v1h-3zM160 343h1v1h-1zM158 344h3v1h-3zM160 345h1v1h-1zM160 346h1v1h-1zM160 347h1v1h-1zM160 348h1v1h-1zM160 349h1v1h-1zM160 350h1v1h-1zM160 351h1v1h-1zM179 343h5v1h-5zM179 344h1v1h-1zM179 345h1v1h-1zM179 346h4v1h-4zM179 347h1v1h-1zM183 347h1v1h-1zM183 348h1v1h-1zM183 349h1v1h-1zM179 350h1v1h-1zM183 350h1v1h-1zM180 351h3v1h-3zM186 351h1v1h-1zM185 352h1v1h-1zM191 343h1v1h-1zM190 344h2v1h-2zM190 345h2v1h-2zM189 346h1v1h-1zM191 346h1v1h-1zM189 347h1v1h-1zM191 347h1v1h-1zM188 348h1v1h-1zM191 348h1v1h-1zM188 349h5v1h-5zM191 350h1v1h-1zM191 351h1v1h-1zM194 343h5v1h-5zM198 344h1v1h-1zM197 345h1v1h-1zM197 346h1v1h-1zM196 347h1v1h-1zM196 348h1v1h-1zM195 349h1v1h-1zM195 350h1v1h-1zM195 351h1v1h-1zM215 343h5v1h-5zM215 344h1v1h-1zM215 345h1v1h-1zM215 346h4v1h-4zM215 347h1v1h-1zM219 347h1v1h-1zM219 348h1v1h-1zM219 349h1v1h-1zM215 350h1v1h-1zM219 350h1v1h-1zM216 351h3v1h-3zM222 351h1v1h-1zM221 352h1v1h-1zM224 343h5v1h-5zM224 344h1v1h-1zM224 345h1v1h-1zM224 346h4v1h-4zM224 347h1v1h-1zM228 347h1v1h-1zM228 348h1v1h-1zM228 349h1v1h-1zM224 350h1v1h-1zM228 350h1v1h-1zM225 351h3v1h-3zM231 343h3v1h-3zM230 344h1v1h-1zM234 344h1v1h-1zM234 345h1v1h-1zM234 346h1v1h-1zM232 347h2v1h-2zM234 348h1v1h-1zM234 349h1v1h-1zM230 350h1v1h-1zM234 350h1v1h-1zM231 351h3v1h-3zM251 343h5v1h-5zM251 344h1v1h-1zM251 345h1v1h-1zM251 346h4v1h-4zM251 347h1v1h-1zM255 347h1v1h-1zM255 348h1v1h-1zM255 349h1v1h-1zM251 350h1v1h-1zM255 350h1v1h-1zM252 351h3v1h-3zM258 351h1v1h-1zM257 352h1v1h-1zM260 343h5v1h-5zM260 344h1v1h-1zM260 345h1v1h-1zM260 346h4v1h-4zM260 347h1v1h-1zM264 347h1v1h-1zM264 348h1v1h-1zM264 349h1v1h-1zM260 350h1v1h-1zM264 350h1v1h-1zM261 351h3v1h-3zM267 343h3v1h-3zM266 344h1v1h-1zM270 344h1v1h-1zM266 345h1v1h-1zM270 345h1v1h-1zM266 346h1v1h-1zM270 346h1v1h-1zM267 347h4v1h-4zM270 348h1v1h-1zM270 349h1v1h-1zM266 350h1v1h-1zM270 350h1v1h-1zM267 351h3v1h-3zM508 224h5v1h-5zM508 225h1v1h-1zM508 226h1v1h-1zM508 227h4v1h-4zM508 228h1v1h-1zM512 228h1v1h-1zM512 229h1v1h-1zM512 230h1v1h-1zM508 231h1v1h-1zM512 231h1v1h-1zM509 232h3v1h-3zM515 232h1v1h-1zM514 233h1v1h-1zM520 224h1v1h-1zM519 225h2v1h-2zM519 226h2v1h-2zM518 227h1v1h-1zM520 227h1v1h-1zM518 228h1v1h-1zM520 228h1v1h-1zM517 229h1v1h-1zM520 229h1v1h-1zM517 230h5v1h-5zM520 231h1v1h-1zM520 232h1v1h-1zM525 224h1v1h-1zM523 225h3v1h-3zM525 226h1v1h-1zM525 227h1v1h-1zM525 228h1v1h-1zM525 229h1v1h-1zM525 230h1v1h-1zM525 231h1v1h-1zM525 232h1v1h-1zM544 224h5v1h-5zM544 225h1v1h-1zM544 226h1v1h-1zM544 227h4v1h-4zM544 228h1v1h-1zM548 228h1v1h-1zM548 229h1v1h-1zM548 230h1v1h-1zM544 231h1v1h-1zM548 231h1v1h-1zM545 232h3v1h-3zM551 232h1v1h-1zM550 233h1v1h-1zM556 224h1v1h-1zM555 225h2v1h-2zM555 226h2v1h-2zM554 227h1v1h-1zM556 227h1v1h-1zM554 228h1v1h-1zM556 228h1v1h-1zM553 229h1v1h-1zM556 229h1v1h-1zM553 230h5v1h-5zM556 231h1v1h-1zM556 232h1v1h-1zM560 224h3v1h-3zM559 225h1v1h-1zM563 225h1v1h-1zM559 226h1v1h-1zM563 226h1v1h-1zM559 227h1v1h-1zM563 227h1v1h-1zM560 228h4v1h-4zM563 229h1v1h-1zM563 230h1v1h-1zM559 231h1v1h-1zM563 231h1v1h-1zM560 232h3v1h-3zM508 241h5v1h-5zM508 242h1v1h-1zM508 243h1v1h-1zM508 244h4v1h-4zM508 245h1v1h-1zM512 245h1v1h-1zM512 246h1v1h-1zM512 247h1v1h-1zM508 248h1v1h-1zM512 248h1v1h-1zM509 249h3v1h-3zM515 249h1v1h-1zM514 250h1v1h-1zM520 241h1v1h-1zM519 242h2v1h-2zM519 243h2v1h-2zM518 244h1v1h-1zM520 244h1v1h-1zM518 245h1v1h-1zM520 245h1v1h-1zM517 246h1v1h-1zM520 246h1v1h-1zM517 247h5v1h-5zM520 248h1v1h-1zM520 249h1v1h-1zM523 241h5v1h-5zM527 242h1v1h-1zM526 243h1v1h-1zM526 244h1v1h-1zM525 245h1v1h-1zM525 246h1v1h-1zM524 247h1v1h-1zM524 248h1v1h-1zM524 249h1v1h-1zM544 241h5v1h-5zM544 242h1v1h-1zM544 243h1v1h-1zM544 244h4v1h-4zM544 245h1v1h-1zM548 245h1v1h-1zM548 246h1v1h-1zM548 247h1v1h-1zM544 248h1v1h-1zM548 248h1v1h-1zM545 249h3v1h-3zM551 249h1v1h-1zM550 250h1v1h-1zM553 241h5v1h-5zM553 242h1v1h-1zM553 243h1v1h-1zM553 244h4v1h-4zM553 245h1v1h-1zM557 245h1v1h-1zM557 246h1v1h-1zM557 247h1v1h-1zM553 248h1v1h-1zM557 248h1v1h-1zM554 249h3v1h-3zM561 241h1v1h-1zM559 242h3v1h-3zM561 243h1v1h-1zM561 244h1v1h-1zM561 245h1v1h-1zM561 246h1v1h-1zM561 247h1v1h-1zM561 248h1v1h-1zM561 249h1v1h-1zM508 258h5v1h-5zM508 259h1v1h-1zM508 260h1v1h-1zM508 261h4v1h-4zM508 262h1v1h-1zM512 262h1v1h-1zM512 263h1v1h-1zM512 264h1v1h-1zM508 265h1v1h-1zM512 265h1v1h-1zM509 266h3v1h-3zM515 266h1v1h-1zM514 267h1v1h-1zM520 258h1v1h-1zM519 259h2v1h-2zM519 260h2v1h-2zM518 261h1v1h-1zM520 261h1v1h-1zM518 262h1v1h-1zM520 262h1v1h-1zM517 263h1v1h-1zM520 263h1v1h-1zM517 264h5v1h-5zM520 265h1v1h-1zM520 266h1v1h-1zM523 258h5v1h-5zM527 259h1v1h-1zM526 260h1v1h-1zM526 261h1v1h-1zM525 262h1v1h-1zM525 263h1v1h-1zM524 264h1v1h-1zM524 265h1v1h-1zM524 266h1v1h-1zM544 258h5v1h-5zM544 259h1v1h-1zM544 260h1v1h-1zM544 261h4v1h-4zM544 262h1v1h-1zM548 262h1v1h-1zM548 263h1v1h-1zM548 264h1v1h-1zM544 265h1v1h-1zM548 265h1v1h-1zM545 266h3v1h-3zM551 266h1v1h-1zM550 267h1v1h-1zM553 258h5v1h-5zM553 259h1v1h-1zM553 260h1v1h-1zM553 261h4v1h-4zM553 262h1v1h-1zM557 262h1v1h-1zM557 263h1v1h-1zM557 264h1v1h-1zM553 265h1v1h-1zM557 265h1v1h-1zM554 266h3v1h-3zM560 258h3v1h-3zM559 259h1v1h-1zM563 259h1v1h-1zM563 260h1v1h-1zM563 261h1v1h-1zM561 262h2v1h-2zM563 263h1v1h-1zM563 264h1v1h-1zM559 265h1v1h-1zM563 265h1v1h-1zM560 266h3v1h-3zM508 275h5v1h-5zM508 276h1v1h-1zM508 277h1v1h-1zM508 278h4v1h-4zM508 279h1v1h-1zM512 279h1v1h-1zM512 280h1v1h-1zM512 281h1v1h-1zM508 282h1v1h-1zM512 282h1v1h-1zM509 283h3v1h-3zM515 283h1v1h-1zM514 284h1v1h-1zM517 275h5v1h-5zM517 276h1v1h-1zM517 277h1v1h-1zM517 278h4v1h-4zM517 279h1v1h-1zM521 279h1v1h-1zM521 280h1v1h-1zM521 281h1v1h-1zM517 282h1v1h-1zM521 282h1v1h-1zM518 283h3v1h-3zM525 275h1v1h-1zM523 276h3v1h-3zM525 277h1v1h-1zM525 278h1v1h-1zM525 279h1v1h-1zM525 280h1v1h-1zM525 281h1v1h-1zM525 282h1v1h-1zM525 283h1v1h-1zM544 275h5v1h-5zM544 276h1v1h-1zM544 277h1v1h-1zM544 278h4v1h-4zM544 279h1v1h-1zM548 279h1v1h-1zM548 280h1v1h-1zM548 281h1v1h-1zM544 282h1v1h-1zM548 282h1v1h-1zM545 283h3v1h-3zM551 283h1v1h-1zM550 284h1v1h-1zM553 275h5v1h-5zM553 276h1v1h-1zM553 277h1v1h-1zM553 278h4v1h-4zM553 279h1v1h-1zM557 279h1v1h-1zM557 280h1v1h-1zM557 281h1v1h-1zM553 282h1v1h-1zM557 282h1v1h-1zM554 283h3v1h-3zM560 275h3v1h-3zM559 276h1v1h-1zM563 276h1v1h-1zM559 277h1v1h-1zM563 277h1v1h-1zM559 278h1v1h-1zM563 278h1v1h-1zM560 279h3v1h-3zM559 280h1v1h-1zM563 280h1v1h-1zM559 281h1v1h-1zM563 281h1v1h-1zM559 282h1v1h-1zM563 282h1v1h-1zM560 283h3v1h-3zM508 292h5v1h-5zM508 293h1v1h-1zM508 294h1v1h-1zM508 295h4v1h-4zM508 296h1v1h-1zM512 296h1v1h-1zM512 297h1v1h-1zM512 298h1v1h-1zM508 299h1v1h-1zM512 299h1v1h-1zM509 300h3v1h-3zM515 300h1v1h-1zM514 301h1v1h-1zM520 292h1v1h-1zM519 293h2v1h-2zM519 294h2v1h-2zM518 295h1v1h-1zM520 295h1v1h-1zM518 296h1v1h-1zM520 296h1v1h-1zM517 297h1v1h-1zM520 297h1v1h-1zM517 298h5v1h-5zM520 299h1v1h-1zM520 300h1v1h-1zM523 292h5v1h-5zM523 293h1v1h-1zM523 294h1v1h-1zM523 295h4v1h-4zM523 296h1v1h-1zM527 296h1v1h-1zM527 297h1v1h-1zM527 298h1v1h-1zM523 299h1v1h-1zM527 299h1v1h-1zM524 300h3v1h-3zM544 292h5v1h-5zM544 293h1v1h-1zM544 294h1v1h-1zM544 295h4v1h-4zM544 296h1v1h-1zM548 296h1v1h-1zM548 297h1v1h-1zM548 298h1v1h-1zM544 299h1v1h-1zM548 299h1v1h-1zM545 300h3v1h-3zM551 300h1v1h-1zM550 301h1v1h-1zM553 292h5v1h-5zM553 293h1v1h-1zM553 294h1v1h-1zM553 295h4v1h-4zM553 296h1v1h-1zM557 296h1v1h-1zM557 297h1v1h-1zM557 298h1v1h-1zM553 299h1v1h-1zM557 299h1v1h-1zM554 300h3v1h-3zM560 292h3v1h-3zM559 293h1v1h-1zM563 293h1v1h-1zM559 294h1v1h-1zM559 295h1v1h-1zM559 296h4v1h-4zM559 297h1v1h-1zM563 297h1v1h-1zM559 298h1v1h-1zM563 298h1v1h-1zM559 299h1v1h-1zM563 299h1v1h-1zM560 300h3v1h-3zM508 309h5v1h-5zM508 310h1v1h-1zM508 311h1v1h-1zM508 312h4v1h-4zM508 313h1v1h-1zM512 313h1v1h-1zM512 314h1v1h-1zM512 315h1v1h-1zM508 316h1v1h-1zM512 316h1v1h-1zM509 317h3v1h-3zM515 317h1v1h-1zM514 318h1v1h-1zM520 309h1v1h-1zM519 310h2v1h-2zM519 311h2v1h-2zM518 312h1v1h-1zM520 312h1v1h-1zM518 313h1v1h-1zM520 313h1v1h-1zM517 314h1v1h-1zM520 314h1v1h-1zM517 315h5v1h-5zM520 316h1v1h-1zM520 317h1v1h-1zM523 309h5v1h-5zM523 310h1v1h-1zM523 311h1v1h-1zM523 312h4v1h-4zM523 313h1v1h-1zM527 313h1v1h-1zM527 314h1v1h-1zM527 315h1v1h-1zM523 316h1v1h-1zM527 316h1v1h-1zM524 317h3v1h-3zM544 309h5v1h-5zM544 310h1v1h-1zM544 311h1v1h-1zM544 312h4v1h-4zM544 313h1v1h-1zM548 313h1v1h-1zM548 314h1v1h-1zM548 315h1v1h-1zM544 316h1v1h-1zM548 316h1v1h-1zM545 317h3v1h-3zM551 317h1v1h-1zM550 318h1v1h-1zM553 309h5v1h-5zM553 310h1v1h-1zM553 311h1v1h-1zM553 312h4v1h-4zM553 313h1v1h-1zM557 313h1v1h-1zM557 314h1v1h-1zM557 315h1v1h-1zM553 316h1v1h-1zM557 316h1v1h-1zM554 317h3v1h-3zM560 309h3v1h-3zM559 310h1v1h-1zM563 310h1v1h-1zM559 311h1v1h-1zM559 312h1v1h-1zM559 313h4v1h-4zM559 314h1v1h-1zM563 314h1v1h-1zM559 315h1v1h-1zM563 315h1v1h-1zM559 316h1v1h-1zM563 316h1v1h-1zM560 317h3v1h-3zM508 326h5v1h-5zM508 327h1v1h-1zM508 328h1v1h-1zM508 329h4v1h-4zM508 330h1v1h-1zM512 330h1v1h-1zM512 331h1v1h-1zM512 332h1v1h-1zM508 333h1v1h-1zM512 333h1v1h-1zM509 334h3v1h-3zM515 334h1v1h-1zM514 335h1v1h-1zM520 326h1v1h-1zM519 327h2v1h-2zM519 328h2v1h-2zM518 329h1v1h-1zM520 329h1v1h-1zM518 330h1v1h-1zM520 330h1v1h-1zM517 331h1v1h-1zM520 331h1v1h-1zM517 332h5v1h-5zM520 333h1v1h-1zM520 334h1v1h-1zM523 326h5v1h-5zM527 327h1v1h-1zM526 328h1v1h-1zM526 329h1v1h-1zM525 330h1v1h-1zM525 331h1v1h-1zM524 332h1v1h-1zM524 333h1v1h-1zM524 334h1v1h-1zM529 326h5v1h-5zM529 327h1v1h-1zM529 328h1v1h-1zM529 329h4v1h-4zM529 330h1v1h-1zM533 330h1v1h-1zM533 331h1v1h-1zM533 332h1v1h-1zM529 333h1v1h-1zM533 333h1v1h-1zM530 334h3v1h-3zM544 326h5v1h-5zM544 327h1v1h-1zM544 328h1v1h-1zM544 329h4v1h-4zM544 330h1v1h-1zM548 330h1v1h-1zM548 331h1v1h-1zM548 332h1v1h-1zM544 333h1v1h-1zM548 333h1v1h-1zM545 334h3v1h-3zM551 334h1v1h-1zM550 335h1v1h-1zM553 326h5v1h-5zM553 327h1v1h-1zM553 328h1v1h-1zM553 329h4v1h-4zM553 330h1v1h-1zM557 330h1v1h-1zM557 331h1v1h-1zM557 332h1v1h-1zM553 333h1v1h-1zM557 333h1v1h-1zM554 334h3v1h-3zM560 326h3v1h-3zM559 327h1v1h-1zM563 327h1v1h-1zM563 328h1v1h-1zM563 329h1v1h-1zM561 330h2v1h-2zM563 331h1v1h-1zM563 332h1v1h-1zM559 333h1v1h-1zM563 333h1v1h-1zM560 334h3v1h-3zM565 326h5v1h-5zM565 327h1v1h-1zM565 328h1v1h-1zM565 329h4v1h-4zM565 330h1v1h-1zM569 330h1v1h-1zM569 331h1v1h-1zM569 332h1v1h-1zM565 333h1v1h-1zM569 333h1v1h-1zM566 334h3v1h-3zM508 343h5v1h-5zM508 344h1v1h-1zM508 345h1v1h-1zM508 346h4v1h-4zM508 347h1v1h-1zM512 347h1v1h-1zM512 348h1v1h-1zM512 349h1v1h-1zM508 350h1v1h-1zM512 350h1v1h-1zM509 351h3v1h-3zM515 351h1v1h-1zM514 352h1v1h-1zM520 343h1v1h-1zM519 344h2v1h-2zM519 345h2v1h-2zM518 346h1v1h-1zM520 346h1v1h-1zM518 347h1v1h-1zM520 347h1v1h-1zM517 348h1v1h-1zM520 348h1v1h-1zM517 349h5v1h-5zM520 350h1v1h-1zM520 351h1v1h-1zM524 343h3v1h-3zM523 344h1v1h-1zM527 344h1v1h-1zM523 345h1v1h-1zM523 346h1v1h-1zM523 347h4v1h-4zM523 348h1v1h-1zM527 348h1v1h-1zM523 349h1v1h-1zM527 349h1v1h-1zM523 350h1v1h-1zM527 350h1v1h-1zM524 351h3v1h-3zM544 343h5v1h-5zM544 344h1v1h-1zM544 345h1v1h-1zM544 346h4v1h-4zM544 347h1v1h-1zM548 347h1v1h-1zM548 348h1v1h-1zM548 349h1v1h-1zM544 350h1v1h-1zM548 350h1v1h-1zM545 351h3v1h-3zM551 351h1v1h-1zM550 352h1v1h-1zM553 343h5v1h-5zM553 344h1v1h-1zM553 345h1v1h-1zM553 346h4v1h-4zM553 347h1v1h-1zM557 347h1v1h-1zM557 348h1v1h-1zM557 349h1v1h-1zM553 350h1v1h-1zM557 350h1v1h-1zM554 351h3v1h-3zM562 343h1v1h-1zM561 344h2v1h-2zM561 345h2v1h-2zM560 346h1v1h-1zM562 346h1v1h-1zM560 347h1v1h-1zM562 347h1v1h-1zM559 348h1v1h-1zM562 348h1v1h-1zM559 349h5v1h-5zM562 350h1v1h-1zM562 351h1v1h-1zM47 179h3v1h-3zM46 180h1v1h-1zM50 180h1v1h-1zM46 181h1v1h-1zM50 181h1v1h-1zM46 182h1v1h-1zM50 182h1v1h-1zM46 183h1v1h-1zM50 183h1v1h-1zM46 184h1v1h-1zM50 184h1v1h-1zM46 185h1v1h-1zM50 185h1v1h-1zM46 186h1v1h-1zM50 186h1v1h-1zM47 187h3v1h-3zM52 179h5v1h-5zM52 180h1v1h-1zM52 181h1v1h-1zM52 182h4v1h-4zM52 183h1v1h-1zM56 183h1v1h-1zM56 184h1v1h-1zM56 185h1v1h-1zM52 186h1v1h-1zM56 186h1v1h-1zM53 187h3v1h-3zM58 187h1v1h-1zM62 179h3v1h-3zM61 180h1v1h-1zM65 180h1v1h-1zM61 181h1v1h-1zM65 181h1v1h-1zM61 182h1v1h-1zM65 182h1v1h-1zM61 183h1v1h-1zM65 183h1v1h-1zM61 184h1v1h-1zM65 184h1v1h-1zM61 185h1v1h-1zM65 185h1v1h-1zM61 186h1v1h-1zM65 186h1v1h-1zM62 187h3v1h-3zM68 179h3v1h-3zM67 180h1v1h-1zM71 180h1v1h-1zM67 181h1v1h-1zM67 182h1v1h-1zM67 183h4v1h-4zM67 184h1v1h-1zM71 184h1v1h-1zM67 185h1v1h-1zM71 185h1v1h-1zM67 186h1v1h-1zM71 186h1v1h-1zM68 187h3v1h-3zM73 187h1v1h-1zM77 179h3v1h-3zM76 180h1v1h-1zM80 180h1v1h-1zM80 181h1v1h-1zM80 182h1v1h-1zM79 183h1v1h-1zM78 184h1v1h-1zM77 185h1v1h-1zM76 186h1v1h-1zM76 187h5v1h-5zM83 179h3v1h-3zM82 180h1v1h-1zM86 180h1v1h-1zM82 181h1v1h-1zM86 181h1v1h-1zM82 182h1v1h-1zM86 182h1v1h-1zM82 183h1v1h-1zM86 183h1v1h-1zM82 184h1v1h-1zM86 184h1v1h-1zM82 185h1v1h-1zM86 185h1v1h-1zM82 186h1v1h-1zM86 186h1v1h-1zM83 187h3v1h-3zM89 179h3v1h-3zM88 180h1v1h-1zM92 180h1v1h-1zM88 181h1v1h-1zM92 181h1v1h-1zM88 182h1v1h-1zM92 182h1v1h-1zM88 183h1v1h-1zM92 183h1v1h-1zM88 184h1v1h-1zM92 184h1v1h-1zM88 185h1v1h-1zM92 185h1v1h-1zM88 186h1v1h-1zM92 186h1v1h-1zM89 187h3v1h-3zM96 179h1v1h-1zM94 180h3v1h-3zM96 181h1v1h-1zM96 182h1v1h-1zM96 183h1v1h-1zM96 184h1v1h-1zM96 185h1v1h-1zM96 186h1v1h-1zM96 187h1v1h-1zM20 390h3v1h-3zM19 391h1v1h-1zM23 391h1v1h-1zM19 392h1v1h-1zM23 392h1v1h-1zM19 393h1v1h-1zM23 393h1v1h-1zM19 394h1v1h-1zM23 394h1v1h-1zM19 395h1v1h-1zM23 395h1v1h-1zM19 396h1v1h-1zM23 396h1v1h-1zM19 397h1v1h-1zM23 397h1v1h-1zM20 398h3v1h-3zM178 390h3v1h-3zM177 391h1v1h-1zM181 391h1v1h-1zM177 392h1v1h-1zM181 392h1v1h-1zM177 393h1v1h-1zM181 393h1v1h-1zM177 394h1v1h-1zM181 394h1v1h-1zM177 395h1v1h-1zM181 395h1v1h-1zM177 396h1v1h-1zM181 396h1v1h-1zM177 397h1v1h-1zM181 397h1v1h-1zM178 398h3v1h-3zM336 390h3v1h-3zM335 391h1v1h-1zM339 391h1v1h-1zM335 392h1v1h-1zM339 392h1v1h-1zM335 393h1v1h-1zM339 393h1v1h-1zM335 394h1v1h-1zM339 394h1v1h-1zM335 395h1v1h-1zM339 395h1v1h-1zM335 396h1v1h-1zM339 396h1v1h-1zM335 397h1v1h-1zM339 397h1v1h-1zM336 398h3v1h-3z" fill="#000"/><path d="M8 343h3v1h-3zM7 344h1v1h-1zM11 344h1v1h-1zM7 345h1v1h-1zM11 345h1v1h-1zM7 346h1v1h-1zM11 346h1v1h-1zM7 347h1v1h-1zM11 347h1v1h-1zM7 348h1v1h-1zM11 348h1v1h-1zM7 349h1v1h-1zM11 349h1v1h-1zM7 350h1v1h-1zM11 350h1v1h-1zM8 351h3v1h-3zM15 343h1v1h-1zM13 344h3v1h-3zM15 345h1v1h-1zM15 346h1v1h-1zM15 347h1v1h-1zM15 348h1v1h-1zM15 349h1v1h-1zM15 350h1v1h-1zM15 351h1v1h-1zM19 351h1v1h-1zM23 343h3v1h-3zM22 344h1v1h-1zM26 344h1v1h-1zM22 345h1v1h-1zM26 345h1v1h-1zM22 346h1v1h-1zM26 346h1v1h-1zM22 347h1v1h-1zM26 347h1v1h-1zM22 348h1v1h-1zM26 348h1v1h-1zM22 349h1v1h-1zM26 349h1v1h-1zM22 350h1v1h-1zM26 350h1v1h-1zM23 351h3v1h-3zM29 343h3v1h-3zM28 344h1v1h-1zM32 344h1v1h-1zM28 345h1v1h-1zM28 346h1v1h-1zM28 347h4v1h-4zM28 348h1v1h-1zM32 348h1v1h-1zM28 349h1v1h-1zM32 349h1v1h-1zM28 350h1v1h-1zM32 350h1v1h-1zM29 351h3v1h-3zM34 351h1v1h-1zM38 343h3v1h-3zM37 344h1v1h-1zM41 344h1v1h-1zM41 345h1v1h-1zM41 346h1v1h-1zM40 347h1v1h-1zM39 348h1v1h-1zM38 349h1v1h-1zM37 350h1v1h-1zM37 351h5v1h-5zM44 343h3v1h-3zM43 344h1v1h-1zM47 344h1v1h-1zM43 345h1v1h-1zM47 345h1v1h-1zM43 346h1v1h-1zM47 346h1v1h-1zM43 347h1v1h-1zM47 347h1v1h-1zM43 348h1v1h-1zM47 348h1v1h-1zM43 349h1v1h-1zM47 349h1v1h-1zM43 350h1v1h-1zM47 350h1v1h-1zM44 351h3v1h-3zM50 343h3v1h-3zM49 344h1v1h-1zM53 344h1v1h-1zM49 345h1v1h-1zM53 345h1v1h-1zM49 346h1v1h-1zM53 346h1v1h-1zM49 347h1v1h-1zM53 347h1v1h-1zM49 348h1v1h-1zM53 348h1v1h-1zM49 349h1v1h-1zM53 349h1v1h-1zM49 350h1v1h-1zM53 350h1v1h-1zM50 351h3v1h-3zM57 343h1v1h-1zM55 344h3v1h-3zM57 345h1v1h-1zM57 346h1v1h-1zM57 347h1v1h-1zM57 348h1v1h-1zM57 349h1v1h-1zM57 350h1v1h-1zM57 351h1v1h-1z" fill="#fff"/></svg>
</div></body></html>
